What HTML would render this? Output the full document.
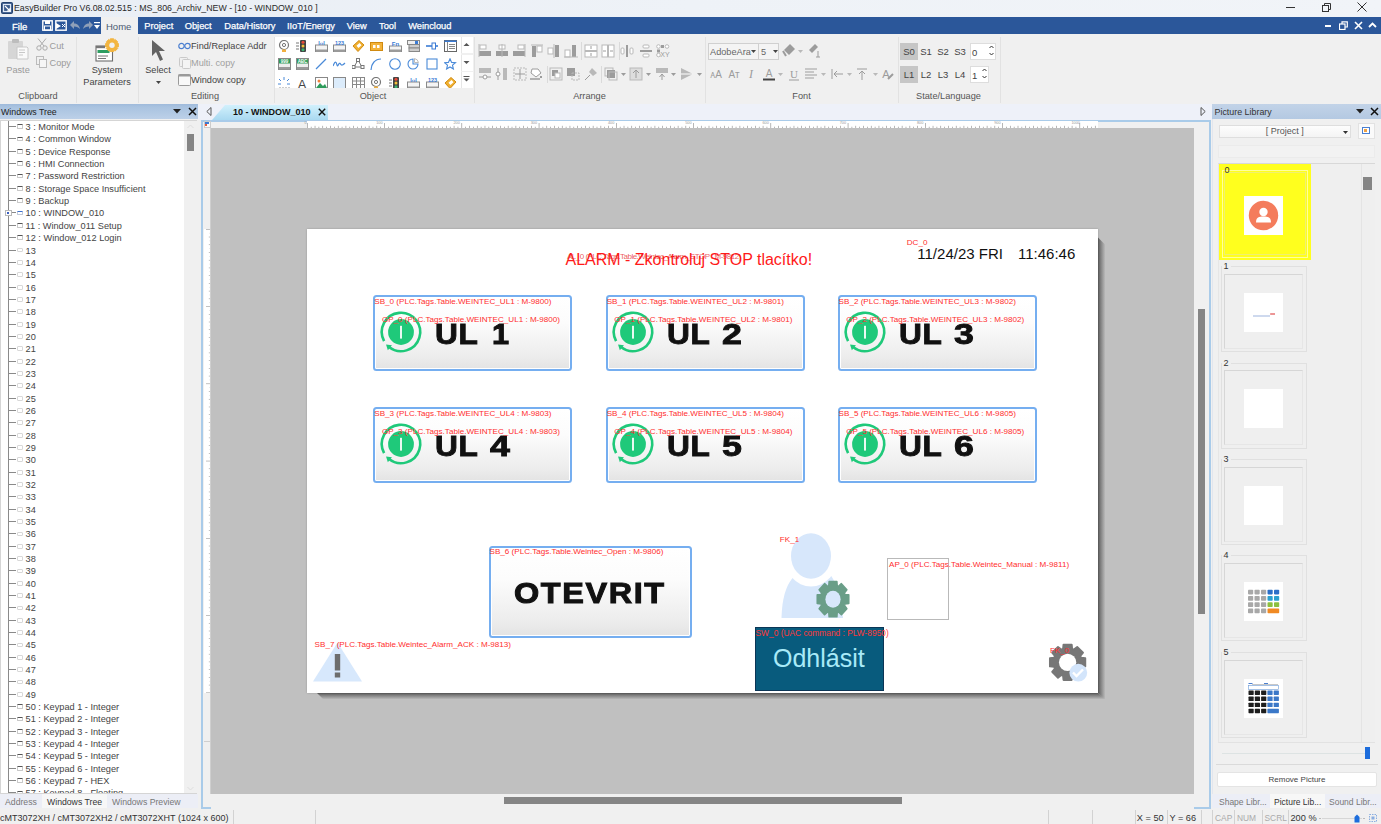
<!DOCTYPE html><html><head><meta charset="utf-8"><style>
html,body{margin:0;padding:0;}
body{width:1381px;height:824px;overflow:hidden;position:relative;background:#f0f0f0;font-family:"Liberation Sans",sans-serif;}
.t{position:absolute;white-space:nowrap;line-height:1;}
svg{display:block;}
</style></head><body>

<div style="position:absolute;left:0px;top:0px;width:1381px;height:17px;background:linear-gradient(90deg,#e9eef5,#eef2f7 50%,#f1f4f8);"></div>
<svg style="position:absolute;left:1px;top:2px;" width="12" height="12" viewBox="0 0 12 12"><rect x="0.5" y="0.5" width="11" height="11" rx="1" fill="#3a5a8c" stroke="#22406e"/><rect x="2.5" y="2.5" width="7" height="7" fill="none" stroke="#dfe8f5" stroke-width="1.2"/><path d="M4 4 L9 9 M9 6 V9 H6" stroke="#fff" stroke-width="1.2" fill="none"/></svg>
<div class="t" style="left:14px;top:3.5px;font-size:8.8px;color:#2a2a2a;">EasyBuilder Pro V6.08.02.515 : MS_806_Archiv_NEW - [10 - WINDOW_010 ]</div>
<div style="position:absolute;left:1286px;top:7px;width:9px;height:1px;background:#333;"></div>
<svg style="position:absolute;left:1322px;top:3px;" width="9" height="9" viewBox="0 0 9 9"><rect x="0.5" y="2.5" width="6" height="6" fill="none" stroke="#333"/><path d="M2.5 2.5 V0.5 H8.5 V6.5 H6.5" fill="none" stroke="#333"/></svg>
<svg style="position:absolute;left:1357px;top:2px;" width="10" height="10" viewBox="0 0 10 10"><path d="M0.5 0.5 L9.5 9.5 M9.5 0.5 L0.5 9.5" stroke="#333" stroke-width="1"/></svg>
<div style="position:absolute;left:0px;top:17px;width:1381px;height:17px;background:#2b579a;"></div>
<div style="position:absolute;left:101px;top:17px;width:37px;height:17px;background:#f0f0f0;"></div>
<div class="t" style="left:12px;top:21.5px;font-size:9.5px;color:#fff;-webkit-text-stroke:0.3px #fff;">File</div>
<svg style="position:absolute;left:42px;top:20px;" width="11" height="11" viewBox="0 0 11 11"><rect x="0.8" y="0.8" width="9.4" height="9.4" fill="none" stroke="#fff" stroke-width="1.4"/><rect x="3" y="1" width="5" height="3" fill="#fff"/><rect x="2.5" y="6" width="6" height="4" fill="none" stroke="#fff"/></svg>
<svg style="position:absolute;left:55px;top:20px;" width="12" height="11" viewBox="0 0 12 11"><rect x="0.8" y="0.8" width="10.4" height="9.4" fill="none" stroke="#fff" stroke-width="1.4"/><path d="M1 3 L6 6 L1 9 Z" fill="#fff"/><path d="M7 4 L10 7 M10 4 L7 7" stroke="#fff"/></svg>
<svg style="position:absolute;left:70px;top:21px;" width="10" height="8" viewBox="0 0 10 8"><path d="M4 0 L0 4 L4 8 V5.5 C7 5.5 8.5 6.5 10 8 C9 4 7 2.5 4 2.5 Z" fill="#8f9fb8"/></svg>
<svg style="position:absolute;left:83px;top:21px;" width="10" height="8" viewBox="0 0 10 8"><path d="M6 0 L10 4 L6 8 V5.5 C3 5.5 1.5 6.5 0 8 C1 4 3 2.5 6 2.5 Z" fill="#8f9fb8"/></svg>
<svg style="position:absolute;left:94px;top:22px;" width="6" height="8" viewBox="0 0 6 8"><rect x="0" y="0" width="6" height="1.2" fill="#fff"/><path d="M0 3 H6 L3 7 Z" fill="#fff"/></svg>
<div class="t" style="left:106px;top:21.5px;font-size:9.5px;color:#4a5a70;">Home</div>
<div class="t" style="left:144.3px;top:21.5px;font-size:9.3px;color:#fff;-webkit-text-stroke:0.25px #fff;">Project</div>
<div class="t" style="left:184.7px;top:21.5px;font-size:9.3px;color:#fff;-webkit-text-stroke:0.25px #fff;">Object</div>
<div class="t" style="left:224.3px;top:21.5px;font-size:9.3px;color:#fff;-webkit-text-stroke:0.25px #fff;">Data/History</div>
<div class="t" style="left:286.9px;top:21.5px;font-size:9.3px;color:#fff;-webkit-text-stroke:0.25px #fff;">IIoT/Energy</div>
<div class="t" style="left:346.7px;top:21.5px;font-size:9.3px;color:#fff;-webkit-text-stroke:0.25px #fff;">View</div>
<div class="t" style="left:379px;top:21.5px;font-size:9.3px;color:#fff;-webkit-text-stroke:0.25px #fff;">Tool</div>
<div class="t" style="left:408.2px;top:21.5px;font-size:9.3px;color:#fff;-webkit-text-stroke:0.25px #fff;">Weincloud</div>
<div style="position:absolute;left:1325px;top:25px;width:6px;height:2px;background:#fff;"></div>
<svg style="position:absolute;left:1339px;top:21px;" width="9" height="9" viewBox="0 0 9 9"><rect x="0.5" y="3" width="5.5" height="5.5" fill="none" stroke="#fff" stroke-width="1.2"/><path d="M3 3 V0.8 H8.3 V6 H6" fill="none" stroke="#fff" stroke-width="1.2"/></svg>
<svg style="position:absolute;left:1354px;top:21px;" width="9" height="9" viewBox="0 0 9 9"><path d="M1 1 L8 8 M8 1 L1 8" stroke="#fff" stroke-width="1.6"/></svg>
<svg style="position:absolute;left:1368px;top:22px;" width="9" height="6" viewBox="0 0 9 6"><path d="M1 5 L4.5 1.5 L8 5" stroke="#fff" stroke-width="1.8" fill="none"/></svg>
<div style="position:absolute;left:0px;top:34px;width:1381px;height:70px;background:#f0f0f0;"></div>
<div style="position:absolute;left:0px;top:103.5px;width:1381px;height:0.8px;background:#d0d6e2;"></div>
<div style="position:absolute;left:76px;top:37px;width:1px;height:66px;background:#e2e2e2;"></div>
<div style="position:absolute;left:138px;top:37px;width:1px;height:66px;background:#e2e2e2;"></div>
<div style="position:absolute;left:273.5px;top:37px;width:1px;height:66px;background:#e2e2e2;"></div>
<div style="position:absolute;left:474px;top:37px;width:1px;height:66px;background:#e2e2e2;"></div>
<div style="position:absolute;left:705px;top:37px;width:1px;height:66px;background:#e2e2e2;"></div>
<div style="position:absolute;left:897.5px;top:37px;width:1px;height:66px;background:#e2e2e2;"></div>
<div style="position:absolute;left:999.5px;top:37px;width:1px;height:66px;background:#e2e2e2;"></div>
<div class="t" style="left:-162px;width:400px;text-align:center;top:91.5px;font-size:9.2px;color:#555;">Clipboard</div>
<div class="t" style="left:5px;width:400px;text-align:center;top:91.5px;font-size:9.2px;color:#555;">Editing</div>
<div class="t" style="left:173px;width:400px;text-align:center;top:91.5px;font-size:9.2px;color:#555;">Object</div>
<div class="t" style="left:389.5px;width:400px;text-align:center;top:91.5px;font-size:9.2px;color:#555;">Arrange</div>
<div class="t" style="left:601.5px;width:400px;text-align:center;top:91.5px;font-size:9.2px;color:#555;">Font</div>
<div class="t" style="left:748.5px;width:400px;text-align:center;top:91.5px;font-size:9.2px;color:#555;">State/Language</div>
<svg style="position:absolute;left:7px;top:38px;" width="22" height="22" viewBox="0 0 22 22"><rect x="1" y="3" width="15" height="18" rx="1" fill="#d6d6d6"/><rect x="5" y="1" width="7" height="4" rx="1" fill="#bdbdbd"/><path d="M10 9 H20 L21 10 V21 H10 Z" fill="#fafafa" stroke="#c8c8c8"/><path d="M12 12 H18 M12 14.5 H18 M12 17 H16" stroke="#c8c8c8"/></svg>
<div class="t" style="left:-182px;width:400px;text-align:center;top:65.5px;font-size:9.2px;color:#9a9a9a;">Paste</div>
<svg style="position:absolute;left:36px;top:38px;" width="12" height="13" viewBox="0 0 12 13"><circle cx="3" cy="10" r="2.2" fill="none" stroke="#aaa"/><circle cx="9" cy="10" r="2.2" fill="none" stroke="#aaa"/><path d="M4 8 L10 0.5 M8 8 L2 0.5" stroke="#aaa"/></svg>
<div class="t" style="left:49.5px;top:41.5px;font-size:9.2px;color:#9a9a9a;">Cut</div>
<svg style="position:absolute;left:36px;top:56px;" width="12" height="13" viewBox="0 0 12 13"><rect x="0.5" y="0.5" width="7" height="8" fill="none" stroke="#bbb"/><rect x="3.5" y="3.5" width="7" height="8" fill="#f6f6f6" stroke="#bbb"/></svg>
<div class="t" style="left:49.5px;top:58.5px;font-size:9.2px;color:#9a9a9a;">Copy</div>
<svg style="position:absolute;left:95px;top:38px;" width="26" height="26" viewBox="0 0 26 26"><rect x="1" y="8" width="16.5" height="15" fill="#fff" stroke="#6d6d6d" stroke-width="1.1"/><rect x="2.5" y="12" width="12" height="3" fill="#2e9e62"/><path d="M3 18 H13 M3 20.5 H11" stroke="#777"/><rect x="1" y="8" width="9" height="2.2" fill="#777"/><path d="M15.15 2.56 L15.24 0.84 L18.76 0.84 L18.85 2.56 L18.97 2.61 L20.25 1.46 L22.74 3.95 L21.59 5.23 L21.64 5.35 L23.36 5.44 L23.36 8.96 L21.64 9.05 L21.59 9.17 L22.74 10.45 L20.25 12.94 L18.97 11.79 L18.85 11.84 L18.76 13.56 L15.24 13.56 L15.15 11.84 L15.03 11.79 L13.75 12.94 L11.26 10.45 L12.41 9.17 L12.36 9.05 L10.64 8.96 L10.64 5.44 L12.36 5.35 L12.41 5.23 L11.26 3.95 L13.75 1.46 L15.03 2.61 Z" fill="#f3b53f" stroke="#f3b53f" stroke-width="1.0" stroke-linejoin="round"/><circle cx="17" cy="7.2" r="2.7" fill="#f0f0f0"/></svg>
<div class="t" style="left:-93px;width:400px;text-align:center;top:65.5px;font-size:9.2px;color:#444;">System</div>
<div class="t" style="left:-93px;width:400px;text-align:center;top:77.5px;font-size:9.2px;color:#444;">Parameters</div>
<svg style="position:absolute;left:151px;top:39px;" width="17" height="23" viewBox="0 0 17 23"><path d="M1 1 L1 17 L5 13 L9 22 L12 20.5 L8 12 L14 12 Z" fill="#646464"/></svg>
<div class="t" style="left:-42px;width:400px;text-align:center;top:65.5px;font-size:9.2px;color:#444;">Select</div>
<svg style="position:absolute;left:156px;top:81px;" width="5" height="3" viewBox="0 0 5 3"><path d="M0 0 H5 L2.5 3 Z" fill="#444"/></svg>
<svg style="position:absolute;left:178px;top:42px;" width="13" height="8" viewBox="0 0 13 8"><circle cx="3.5" cy="4" r="2.7" fill="none" stroke="#4a7fd0" stroke-width="1.2"/><circle cx="9.5" cy="4" r="2.7" fill="none" stroke="#4a7fd0" stroke-width="1.2"/></svg>
<div class="t" style="left:191px;top:41.5px;font-size:9.2px;color:#444;">Find/Replace Addr</div>
<svg style="position:absolute;left:179px;top:57px;" width="12" height="12" viewBox="0 0 12 12"><rect x="0.5" y="0.5" width="8" height="9" rx="1" fill="none" stroke="#c9c9c9"/><rect x="3.5" y="2.5" width="8" height="9" rx="1" fill="#f4f4f4" stroke="#c9c9c9"/></svg>
<div class="t" style="left:191px;top:58.5px;font-size:9.2px;color:#a0a0a0;">Multi. copy</div>
<svg style="position:absolute;left:178px;top:74px;" width="13" height="12" viewBox="0 0 13 12"><rect x="0.5" y="0.5" width="12" height="11" rx="1" fill="#f8f8f8" stroke="#9a9a9a"/><rect x="0.5" y="0.5" width="12" height="2" fill="#9a9a9a"/></svg>
<div class="t" style="left:191px;top:75.5px;font-size:9.2px;color:#444;">Window copy</div>
<div style="position:absolute;left:275px;top:37px;width:186px;height:51px;background:#fff;"></div>
<div style="position:absolute;left:461px;top:37px;width:11px;height:16px;background:#fff;border-left:1px solid #e6e6e6;"></div>
<div style="position:absolute;left:461px;top:54.5px;width:11px;height:16px;background:#fff;border-left:1px solid #e6e6e6;"></div>
<div style="position:absolute;left:461px;top:71.5px;width:11px;height:16px;background:#fff;border-left:1px solid #e6e6e6;"></div>
<svg style="position:absolute;left:463px;top:42px;" width="7" height="5" viewBox="0 0 7 5"><path d="M0.5 4 L3.5 1 L6.5 4 Z" fill="#555"/></svg>
<svg style="position:absolute;left:463px;top:60px;" width="7" height="5" viewBox="0 0 7 5"><path d="M0.5 1 L3.5 4 L6.5 1 Z" fill="#555"/></svg>
<svg style="position:absolute;left:463px;top:76px;" width="7" height="6" viewBox="0 0 7 6"><path d="M0.5 0.5 H6.5" stroke="#555"/><path d="M0.5 2.5 L3.5 5.5 L6.5 2.5 Z" fill="#555"/></svg>
<div style="position:absolute;left:275px;top:37px;width:186px;height:51px;overflow:hidden;">
<svg style="position:absolute;left:2.9px;top:2.9px;" width="13" height="12" viewBox="0 0 13 12"><circle cx="6" cy="5" r="4.5" fill="#fff" stroke="#777" stroke-width="1.2"/><circle cx="6" cy="5" r="1.6" fill="none" stroke="#777"/><rect x="4" y="9.5" width="4" height="2.5" fill="#f0b040"/></svg>
<svg style="position:absolute;left:21.4px;top:2.9px;" width="13" height="12" viewBox="0 0 13 12"><rect x="4" y="0" width="6" height="12" rx="1" fill="#444"/><circle cx="7" cy="2.2" r="1.5" fill="#e84a3a"/><circle cx="7" cy="6" r="1.5" fill="#f4c03a"/><circle cx="7" cy="9.8" r="1.5" fill="#3cb371"/><path d="M0 3 H3 M0 6 H3 M0 9 H3" stroke="#777"/></svg>
<svg style="position:absolute;left:39.9px;top:2.9px;" width="13" height="12" viewBox="0 0 13 12"><rect x="0.5" y="5" width="12" height="7" fill="#f4f4f4" stroke="#8a8a8a"/><rect x="1" y="9.5" width="11" height="2.5" fill="#9a9a9a"/><text x="6.5" y="5" font-size="5.5" font-family="Liberation Sans" font-weight="bold" fill="#3a7bd5" text-anchor="middle">I‹›I</text></svg>
<svg style="position:absolute;left:58.4px;top:2.9px;" width="13" height="12" viewBox="0 0 13 12"><rect x="0.5" y="5" width="12" height="7" fill="#f4f4f4" stroke="#8a8a8a"/><rect x="1" y="9.5" width="11" height="2.5" fill="#9a9a9a"/><text x="6.5" y="5" font-size="5.5" font-family="Liberation Sans" font-weight="bold" fill="#3a7bd5" text-anchor="middle">123</text></svg>
<svg style="position:absolute;left:76.9px;top:2.9px;" width="13" height="12" viewBox="0 0 13 12"><path d="M1 6 L7 0.5 L12 5 L6 11.5 Z" fill="#f0b030" stroke="#d08a10"/><rect x="5" y="4" width="4" height="3" fill="#fff" transform="rotate(-40 7 5.5)"/></svg>
<svg style="position:absolute;left:95.4px;top:2.9px;" width="13" height="12" viewBox="0 0 13 12"><rect x="0.5" y="2.5" width="12" height="8" fill="#f3b23a" stroke="#d08a10"/><rect x="3" y="5" width="2.5" height="3" fill="#fff"/><rect x="7" y="5" width="2.5" height="3" fill="#fff"/></svg>
<svg style="position:absolute;left:113.9px;top:2.9px;" width="13" height="12" viewBox="0 0 13 12"><rect x="0.5" y="6" width="12" height="6" fill="#f4f4f4" stroke="#8a8a8a"/><rect x="1" y="9.5" width="11" height="2.5" fill="#9a9a9a"/><text x="6.5" y="5.5" font-size="6" font-family="Liberation Sans" font-weight="bold" fill="#3a7bd5" text-anchor="middle">Fn</text></svg>
<svg style="position:absolute;left:132.4px;top:2.9px;" width="13" height="12" viewBox="0 0 13 12"><rect x="0.5" y="0.5" width="12" height="4" fill="#eee" stroke="#888"/><rect x="8" y="1" width="3" height="3" fill="#3a7bd5"/><rect x="2" y="4.5" width="10.5" height="3.5" fill="#ccc" stroke="#888"/><rect x="2" y="8" width="10.5" height="3.5" fill="#ccc" stroke="#888"/></svg>
<svg style="position:absolute;left:150.9px;top:2.9px;" width="13" height="12" viewBox="0 0 13 12"><path d="M0 6 H12" stroke="#3a7bd5" stroke-width="1.6"/><rect x="6" y="3" width="3.5" height="6" fill="#fff" stroke="#3a7bd5"/></svg>
<svg style="position:absolute;left:169.4px;top:2.9px;" width="13" height="12" viewBox="0 0 13 12"><rect x="0.5" y="0.5" width="12" height="11" fill="#fff" stroke="#666"/><rect x="0.5" y="0.5" width="12" height="1.5" fill="#3a7bd5"/><path d="M3.5 2 V11.5 M5 4.5 H11 M5 6.5 H11 M5 8.5 H11" stroke="#888"/></svg>
<svg style="position:absolute;left:2.9px;top:21.4px;" width="13" height="12" viewBox="0 0 13 12"><rect x="0.5" y="0.5" width="12" height="11" fill="#eee" stroke="#888"/><rect x="1" y="1" width="11" height="4.5" fill="#2e9b5a"/><text x="6.5" y="5" font-size="4.5" font-family="Liberation Sans" font-weight="bold" fill="#fff" text-anchor="middle">999</text><rect x="1" y="9" width="11" height="2.5" fill="#9a9a9a"/></svg>
<svg style="position:absolute;left:21.4px;top:21.4px;" width="13" height="12" viewBox="0 0 13 12"><rect x="0.5" y="0.5" width="12" height="11" fill="#eee" stroke="#888"/><rect x="1" y="1" width="11" height="4.5" fill="#2e9b5a"/><text x="6.5" y="5" font-size="4.5" font-family="Liberation Sans" font-weight="bold" fill="#fff" text-anchor="middle">ABC</text><rect x="1" y="9" width="11" height="2.5" fill="#9a9a9a"/></svg>
<svg style="position:absolute;left:39.9px;top:21.4px;" width="13" height="12" viewBox="0 0 13 12"><path d="M1 11 L11 1" stroke="#4a8ad8" stroke-width="1.2"/></svg>
<svg style="position:absolute;left:58.4px;top:21.4px;" width="13" height="12" viewBox="0 0 13 12"><path d="M0 8 C2 3 3 3 4 7 C5 10 6 3 7.5 6 C8.5 8 10 7 12 5" stroke="#4a8ad8" stroke-width="1.2" fill="none"/></svg>
<svg style="position:absolute;left:76.9px;top:21.4px;" width="13" height="12" viewBox="0 0 13 12"><path d="M2 9 H10 M6 2 L2 9 M6 2 L10 9" stroke="#777" fill="none"/><rect x="0" y="7.5" width="3" height="3" fill="#fff" stroke="#777"/><rect x="9" y="7.5" width="3" height="3" fill="#fff" stroke="#777"/><rect x="4.5" y="0.5" width="3" height="3" fill="#fff" stroke="#777"/></svg>
<svg style="position:absolute;left:95.4px;top:21.4px;" width="13" height="12" viewBox="0 0 13 12"><path d="M1 12 C1 6 5 1 11 1" stroke="#4a8ad8" stroke-width="1.2" fill="none"/></svg>
<svg style="position:absolute;left:113.9px;top:21.4px;" width="13" height="12" viewBox="0 0 13 12"><circle cx="6" cy="6" r="5.3" fill="none" stroke="#4a8ad8" stroke-width="1.1"/></svg>
<svg style="position:absolute;left:132.4px;top:21.4px;" width="13" height="12" viewBox="0 0 13 12"><path d="M6 1 A5 5 0 1 0 11 6 H6 Z" fill="none" stroke="#4a8ad8" stroke-width="1.1"/><path d="M7.5 0.5 A5 5 0 0 1 11.5 4.5 H7.5 Z" fill="none" stroke="#bbb"/></svg>
<svg style="position:absolute;left:150.9px;top:21.4px;" width="13" height="12" viewBox="0 0 13 12"><rect x="1" y="1" width="10" height="10" fill="none" stroke="#4a8ad8" stroke-width="1.1"/></svg>
<svg style="position:absolute;left:169.4px;top:21.4px;" width="13" height="12" viewBox="0 0 13 12"><path d="M6 0.8 L7.6 4.4 L11.5 4.7 L8.5 7.2 L9.4 11 L6 9 L2.6 11 L3.5 7.2 L0.5 4.7 L4.4 4.4 Z" fill="none" stroke="#4a8ad8" stroke-width="1.1"/></svg>
<svg style="position:absolute;left:2.9px;top:39.7px;" width="13" height="12" viewBox="0 0 13 12"><path d="M6 0 V3 M1 2 L3 4 M11 2 L9 4 M0 7 H3 M9 7 H12" stroke="#4a8ad8"/><path d="M2 10 V12 M5 10 V12 M8 10 V12 M11 10 V12" stroke="#999"/></svg>
<svg style="position:absolute;left:21.4px;top:39.7px;" width="13" height="12" viewBox="0 0 13 12"><text x="6" y="12" font-size="13" font-family="Liberation Sans" fill="#444" text-anchor="middle">A</text></svg>
<svg style="position:absolute;left:39.9px;top:39.7px;" width="13" height="12" viewBox="0 0 13 12"><rect x="0.5" y="0.5" width="12" height="11" fill="#fff" stroke="#888"/><circle cx="4" cy="4" r="1.5" fill="#f0803a"/><path d="M1 11 L5 6 L8 9 L10 7 L12 11 Z" fill="#2e9b5a"/></svg>
<svg style="position:absolute;left:58.4px;top:39.7px;" width="13" height="12" viewBox="0 0 13 12"><rect x="0.5" y="0.5" width="12" height="11" fill="#dcecfb" stroke="#888"/></svg>
<svg style="position:absolute;left:76.9px;top:39.7px;" width="13" height="12" viewBox="0 0 13 12"><rect x="0.5" y="0.5" width="12" height="11" fill="#fff" stroke="#888"/><path d="M4.5 0.5 V11.5 M8.5 0.5 V11.5 M0.5 4 H12.5 M0.5 7.5 H12.5" stroke="#888"/></svg>
<svg style="position:absolute;left:95.4px;top:39.7px;" width="13" height="12" viewBox="0 0 13 12"><circle cx="6" cy="5" r="4.5" fill="#fff" stroke="#777" stroke-width="1.2"/><circle cx="6" cy="5" r="1.6" fill="none" stroke="#777"/><rect x="4" y="9.5" width="4" height="2.5" fill="#f0b040"/></svg>
<svg style="position:absolute;left:113.9px;top:39.7px;" width="13" height="12" viewBox="0 0 13 12"><rect x="4" y="0" width="6" height="12" rx="1" fill="#444"/><circle cx="7" cy="2.2" r="1.5" fill="#e84a3a"/><circle cx="7" cy="6" r="1.5" fill="#f4c03a"/><circle cx="7" cy="9.8" r="1.5" fill="#3cb371"/><path d="M0 3 H3 M0 6 H3 M0 9 H3" stroke="#777"/></svg>
<svg style="position:absolute;left:132.4px;top:39.7px;" width="13" height="12" viewBox="0 0 13 12"><rect x="0.5" y="5" width="12" height="7" fill="#f4f4f4" stroke="#8a8a8a"/><rect x="1" y="9.5" width="11" height="2.5" fill="#9a9a9a"/><text x="6.5" y="5" font-size="5.5" font-family="Liberation Sans" font-weight="bold" fill="#3a7bd5" text-anchor="middle">I‹›I</text></svg>
<svg style="position:absolute;left:150.9px;top:39.7px;" width="13" height="12" viewBox="0 0 13 12"><rect x="0.5" y="5" width="12" height="7" fill="#f4f4f4" stroke="#8a8a8a"/><rect x="1" y="9.5" width="11" height="2.5" fill="#9a9a9a"/><text x="6.5" y="5" font-size="5.5" font-family="Liberation Sans" font-weight="bold" fill="#3a7bd5" text-anchor="middle">123</text></svg>
<svg style="position:absolute;left:169.4px;top:39.7px;" width="13" height="12" viewBox="0 0 13 12"><path d="M1 6 L7 0.5 L12 5 L6 11.5 Z" fill="#f0b030" stroke="#d08a10"/><rect x="5" y="4" width="4" height="3" fill="#fff" transform="rotate(-40 7 5.5)"/></svg>
</div>
<svg style="position:absolute;left:477.8px;top:43.5px;" width="14" height="14" viewBox="0 0 14 14"><rect x="2" y="1" width="6" height="4" fill="#fff" stroke="#b9b9b9"/><rect x="1" y="7" width="12" height="5" fill="#9c9c9c"/><path d="M1 0 V13" stroke="#b9b9b9"/></svg>
<svg style="position:absolute;left:494.8px;top:43.5px;" width="14" height="14" viewBox="0 0 14 14"><rect x="4" y="1" width="6" height="4" fill="#fff" stroke="#b9b9b9"/><rect x="1" y="7" width="12" height="5" fill="#9c9c9c"/><path d="M7 0 V13" stroke="#b9b9b9"/></svg>
<svg style="position:absolute;left:511.70000000000005px;top:43.5px;" width="14" height="14" viewBox="0 0 14 14"><rect x="6" y="1" width="6" height="4" fill="#fff" stroke="#b9b9b9"/><rect x="1" y="7" width="12" height="5" fill="#9c9c9c"/><path d="M13 0 V13" stroke="#b9b9b9"/></svg>
<svg style="position:absolute;left:529.6px;top:43.5px;" width="14" height="14" viewBox="0 0 14 14"><path d="M1 1 H13" stroke="#b9b9b9"/><rect x="2" y="2" width="4" height="11" fill="#9c9c9c"/><rect x="7" y="2" width="5" height="6" fill="#fff" stroke="#b9b9b9"/></svg>
<svg style="position:absolute;left:547.3px;top:43.5px;" width="14" height="14" viewBox="0 0 14 14"><rect x="1" y="4" width="5" height="6" fill="#fff" stroke="#b9b9b9"/><rect x="8" y="1" width="4" height="12" fill="#9c9c9c"/><path d="M7 0 V14" stroke="#b9b9b9"/></svg>
<svg style="position:absolute;left:564.3px;top:43.5px;" width="14" height="14" viewBox="0 0 14 14"><rect x="1" y="6" width="5" height="7" fill="#fff" stroke="#b9b9b9"/><rect x="8" y="1" width="4" height="12" fill="#9c9c9c"/><path d="M0 13 H14" stroke="#b9b9b9"/></svg>
<svg style="position:absolute;left:583.8px;top:43.5px;" width="14" height="14" viewBox="0 0 14 14"><rect x="1" y="1" width="12" height="12" fill="#fff" stroke="#b9b9b9"/><path d="M1 7 H13" stroke="#b9b9b9" stroke-width="2"/><path d="M7 2 V5 M7 9 V12" stroke="#9c9c9c"/></svg>
<svg style="position:absolute;left:601.2px;top:43.5px;" width="14" height="14" viewBox="0 0 14 14"><rect x="1" y="1" width="12" height="12" fill="#fff" stroke="#b9b9b9"/><path d="M7 1 V13" stroke="#b9b9b9" stroke-width="2"/><path d="M2 7 H5 M9 7 H12" stroke="#9c9c9c"/></svg>
<svg style="position:absolute;left:620.3px;top:43.5px;" width="14" height="14" viewBox="0 0 14 14"><rect x="1" y="4" width="3" height="6" rx="1" fill="#fff" stroke="#b9b9b9"/><rect x="10" y="4" width="3" height="6" rx="1" fill="#fff" stroke="#b9b9b9"/><path d="M7 1 V13" stroke="#9c9c9c" stroke-width="2"/></svg>
<svg style="position:absolute;left:638.5px;top:43.5px;" width="14" height="14" viewBox="0 0 14 14"><rect x="4" y="1" width="6" height="3" rx="1" fill="#fff" stroke="#b9b9b9"/><rect x="4" y="10" width="6" height="3" rx="1" fill="#fff" stroke="#b9b9b9"/><path d="M1 7 H13" stroke="#9c9c9c" stroke-width="2"/></svg>
<svg style="position:absolute;left:655.9px;top:43.5px;" width="14" height="14" viewBox="0 0 14 14"><circle cx="2.5" cy="2.5" r="1.8" fill="#fff" stroke="#b9b9b9"/><rect x="5" y="1" width="3" height="3" fill="#9c9c9c"/><circle cx="11" cy="2.5" r="1.8" fill="#fff" stroke="#b9b9b9"/><rect x="1" y="5.5" width="3" height="3" fill="#9c9c9c"/><circle cx="2.5" cy="11" r="1.8" fill="#fff" stroke="#b9b9b9"/><text x="9" y="13" font-size="7" font-family="Liberation Sans" fill="#9c9c9c" text-anchor="middle">XY</text></svg>
<div style="position:absolute;left:581.2px;top:42px;width:1px;height:18px;background:#dadada;"></div>
<div style="position:absolute;left:618.6px;top:42px;width:1px;height:18px;background:#dadada;"></div>
<svg style="position:absolute;left:477.8px;top:66.6px;" width="14" height="14" viewBox="0 0 14 14"><rect x="1" y="1" width="12" height="5" fill="#b9b9b9"/><path d="M1 10 H13" stroke="#9c9c9c"/><circle cx="7" cy="10" r="2" fill="#fff" stroke="#9c9c9c"/></svg>
<svg style="position:absolute;left:495.2px;top:66.6px;" width="14" height="14" viewBox="0 0 14 14"><rect x="8" y="1" width="4" height="12" fill="#b9b9b9"/><path d="M3 1 V13" stroke="#9c9c9c"/><circle cx="3" cy="7" r="2" fill="#fff" stroke="#9c9c9c"/></svg>
<svg style="position:absolute;left:512.5px;top:66.6px;" width="14" height="14" viewBox="0 0 14 14"><rect x="1" y="1" width="12" height="12" fill="none" stroke="#b9b9b9" stroke-dasharray="2 1"/><path d="M7 2 V12 M2 7 H12" stroke="#9c9c9c"/></svg>
<svg style="position:absolute;left:529px;top:66.6px;" width="14" height="14" viewBox="0 0 14 14"><path d="M3 2 L9 2 L12 6 L7 10 L2 6 Z" fill="#fff" stroke="#9c9c9c"/><path d="M1 12 H11" stroke="#9c9c9c" stroke-width="1.5"/><rect x="11" y="9" width="2" height="2" fill="#9c9c9c"/></svg>
<svg style="position:absolute;left:549px;top:66.6px;" width="14" height="14" viewBox="0 0 14 14"><rect x="1" y="1" width="12" height="12" fill="none" stroke="#b9b9b9"/><rect x="3" y="3" width="6" height="6" fill="#9c9c9c"/><rect x="6" y="6" width="5" height="5" fill="#fff" stroke="#b9b9b9"/></svg>
<svg style="position:absolute;left:566.4px;top:66.6px;" width="14" height="14" viewBox="0 0 14 14"><rect x="1" y="1" width="8" height="8" fill="#9c9c9c"/><rect x="6" y="6" width="7" height="7" fill="none" stroke="#b9b9b9" stroke-dasharray="2 1"/></svg>
<svg style="position:absolute;left:583.8px;top:66.6px;" width="14" height="14" viewBox="0 0 14 14"><path d="M8 1 L13 6 L9 9 L5 5 Z" fill="#b9b9b9"/><path d="M6 8 L1 13" stroke="#9c9c9c"/></svg>
<svg style="position:absolute;left:603.8px;top:66.6px;" width="14" height="14" viewBox="0 0 14 14"><rect x="1" y="1" width="8" height="8" fill="none" stroke="#b9b9b9"/><rect x="3" y="3" width="8" height="8" fill="#9c9c9c"/><rect x="5" y="5" width="8" height="8" fill="none" stroke="#b9b9b9"/></svg>
<svg style="position:absolute;left:629px;top:66.6px;" width="14" height="14" viewBox="0 0 14 14"><rect x="1" y="1" width="12" height="12" fill="#ddd" stroke="#b9b9b9"/><path d="M7 11 V3 M4 6 L7 3 L10 6" stroke="#9c9c9c" fill="none"/></svg>
<svg style="position:absolute;left:655px;top:66.6px;" width="14" height="14" viewBox="0 0 14 14"><rect x="1" y="1" width="12" height="5" fill="#b9b9b9"/><path d="M7 13 V7 M4.5 10 L7 7 L9.5 10" stroke="#9c9c9c" fill="none"/></svg>
<svg style="position:absolute;left:680px;top:66.6px;" width="14" height="14" viewBox="0 0 14 14"><path d="M1 1 L13 7 L1 13 Z" fill="#b9b9b9"/><path d="M1 7 H13" stroke="#fff"/></svg>
<svg style="position:absolute;left:620.5px;top:72.5px;" width="5" height="3" viewBox="0 0 5 3"><path d="M0 0 H5 L2.5 3 Z" fill="#9c9c9c"/></svg>
<svg style="position:absolute;left:645.5px;top:72.5px;" width="5" height="3" viewBox="0 0 5 3"><path d="M0 0 H5 L2.5 3 Z" fill="#9c9c9c"/></svg>
<svg style="position:absolute;left:670.5px;top:72.5px;" width="5" height="3" viewBox="0 0 5 3"><path d="M0 0 H5 L2.5 3 Z" fill="#9c9c9c"/></svg>
<svg style="position:absolute;left:696.5px;top:72.5px;" width="5" height="3" viewBox="0 0 5 3"><path d="M0 0 H5 L2.5 3 Z" fill="#9c9c9c"/></svg>
<div style="position:absolute;left:546.5px;top:66px;width:1px;height:17px;background:#dadada;"></div>
<div style="position:absolute;left:600.7px;top:66px;width:1px;height:17px;background:#dadada;"></div>
<div style="position:absolute;left:708px;top:42.5px;width:71px;height:17px;background:#f4f4f4;border:1px solid #d0d0d0;box-sizing:border-box;"></div>
<div style="position:absolute;left:758px;top:43px;width:1px;height:16px;background:#d0d0d0;"></div>
<div class="t" style="left:710px;top:47.5px;font-size:9.2px;color:#666;">AdobeAra</div>
<svg style="position:absolute;left:751px;top:50px;" width="5" height="3" viewBox="0 0 5 3"><path d="M0 0 H5 L2.5 3 Z" fill="#444"/></svg>
<div class="t" style="left:761px;top:47.5px;font-size:9.2px;color:#666;">5</div>
<svg style="position:absolute;left:773px;top:50px;" width="5" height="3" viewBox="0 0 5 3"><path d="M0 0 H5 L2.5 3 Z" fill="#444"/></svg>
<svg style="position:absolute;left:782px;top:43px;" width="14" height="15" viewBox="0 0 14 15"><path d="M2 7 L8 1 L13 6 L7 12 Z" fill="#9c9c9c"/><path d="M1 8 L4 13" stroke="#9c9c9c" stroke-width="2"/></svg>
<svg style="position:absolute;left:798px;top:50px;" width="5" height="3" viewBox="0 0 5 3"><path d="M0 0 H5 L2.5 3 Z" fill="#b9b9b9"/></svg>
<svg style="position:absolute;left:807px;top:43px;" width="14" height="15" viewBox="0 0 14 15"><path d="M2 7 L8 1 L11 4 L5 10 Z" fill="#9c9c9c"/><path d="M11 8 V14 M9 14 H13" stroke="#9c9c9c"/></svg>
<svg style="position:absolute;left:709px;top:67px;" width="14" height="14" viewBox="0 0 14 14"><text x="7" y="11" font-size="10" font-family="Liberation Sans" fill="#9c9c9c" text-anchor="middle">ᴀA</text></svg>
<svg style="position:absolute;left:727px;top:67px;" width="14" height="14" viewBox="0 0 14 14"><text x="7" y="11" font-size="10" font-family="Liberation Sans" fill="#9c9c9c" text-anchor="middle">Aᴛ</text></svg>
<svg style="position:absolute;left:744px;top:67px;" width="14" height="14" viewBox="0 0 14 14"><text x="7" y="11" font-size="12" font-family="Liberation Serif" font-style="italic" fill="#9c9c9c" text-anchor="middle">I</text></svg>
<svg style="position:absolute;left:762px;top:67px;" width="14" height="14" viewBox="0 0 14 14"><text x="7" y="10" font-size="10" font-family="Liberation Sans" fill="#9c9c9c" text-anchor="middle">A</text><rect x="1" y="11.5" width="12" height="2" fill="#444"/></svg>
<svg style="position:absolute;left:787px;top:67px;" width="14" height="14" viewBox="0 0 14 14"><text x="7" y="11" font-size="11" font-family="Liberation Serif" fill="#9c9c9c" text-anchor="middle">U</text><path d="M2 13 H12" stroke="#9c9c9c"/></svg>
<svg style="position:absolute;left:804px;top:67px;" width="14" height="14" viewBox="0 0 14 14"><path d="M1 2 H13 M1 5 H10 M1 8 H13 M1 11 H10" stroke="#b9b9b9" stroke-width="1.5"/></svg>
<svg style="position:absolute;left:830px;top:67px;" width="14" height="14" viewBox="0 0 14 14"><path d="M2 2 V12 M4 7 H13 M4 7 L7 4 M4 7 L7 10" stroke="#9c9c9c" fill="none"/></svg>
<svg style="position:absolute;left:855px;top:67px;" width="14" height="14" viewBox="0 0 14 14"><path d="M2 2 H12 M7 4 V13 M4 7 L7 4 L10 7" stroke="#9c9c9c" fill="none"/></svg>
<svg style="position:absolute;left:880px;top:67px;" width="14" height="14" viewBox="0 0 14 14"><text x="6" y="11" font-size="11" font-family="Liberation Sans" fill="#9c9c9c" text-anchor="middle">A</text><path d="M8 12 L13 7" stroke="#9c9c9c" stroke-width="2"/></svg>
<svg style="position:absolute;left:777.5px;top:73px;" width="5" height="3" viewBox="0 0 5 3"><path d="M0 0 H5 L2.5 3 Z" fill="#b9b9b9"/></svg>
<svg style="position:absolute;left:820.5px;top:73px;" width="5" height="3" viewBox="0 0 5 3"><path d="M0 0 H5 L2.5 3 Z" fill="#b9b9b9"/></svg>
<svg style="position:absolute;left:846.5px;top:73px;" width="5" height="3" viewBox="0 0 5 3"><path d="M0 0 H5 L2.5 3 Z" fill="#b9b9b9"/></svg>
<svg style="position:absolute;left:872.5px;top:73px;" width="5" height="3" viewBox="0 0 5 3"><path d="M0 0 H5 L2.5 3 Z" fill="#b9b9b9"/></svg>
<div style="position:absolute;left:900px;top:42.5px;width:18px;height:17px;background:#c6c6c6;"></div>
<div style="position:absolute;left:900px;top:65.5px;width:18px;height:17px;background:#c6c6c6;"></div>
<div class="t" style="left:709px;width:400px;text-align:center;top:46.5px;font-size:9.5px;color:#444;">S0</div>
<div class="t" style="left:726px;width:400px;text-align:center;top:46.5px;font-size:9.5px;color:#444;">S1</div>
<div class="t" style="left:743px;width:400px;text-align:center;top:46.5px;font-size:9.5px;color:#444;">S2</div>
<div class="t" style="left:760px;width:400px;text-align:center;top:46.5px;font-size:9.5px;color:#444;">S3</div>
<div class="t" style="left:709px;width:400px;text-align:center;top:69.5px;font-size:9.5px;color:#444;">L1</div>
<div class="t" style="left:726px;width:400px;text-align:center;top:69.5px;font-size:9.5px;color:#444;">L2</div>
<div class="t" style="left:743px;width:400px;text-align:center;top:69.5px;font-size:9.5px;color:#444;">L3</div>
<div class="t" style="left:760px;width:400px;text-align:center;top:69.5px;font-size:9.5px;color:#444;">L4</div>
<div style="position:absolute;left:970px;top:42.5px;width:26px;height:17px;background:#fff;border:1px solid #ddd;box-sizing:border-box;"></div>
<div class="t" style="left:972px;top:47.5px;font-size:9.5px;color:#444;">0</div>
<svg style="position:absolute;left:989px;top:45px;" width="5" height="11" viewBox="0 0 5 11"><path d="M0.5 3 L2.5 1 L4.5 3 M0.5 8 L2.5 10 L4.5 8" stroke="#333" fill="none"/></svg>
<div style="position:absolute;left:970px;top:65.5px;width:19px;height:17px;background:#fff;border:1px solid #ddd;box-sizing:border-box;"></div>
<div class="t" style="left:972px;top:70.5px;font-size:9.5px;color:#444;">1</div>
<svg style="position:absolute;left:982px;top:68px;" width="5" height="11" viewBox="0 0 5 11"><path d="M0.5 3 L2.5 1 L4.5 3 M0.5 8 L2.5 10 L4.5 8" stroke="#333" fill="none"/></svg>
<div style="position:absolute;left:0px;top:104px;width:198px;height:14.5px;background:linear-gradient(#9fbadb,#a9c3e0 20%,#bcd0e8);"></div>
<div class="t" style="left:1px;top:107.5px;font-size:8.8px;color:#222;">Windows Tree</div>
<svg style="position:absolute;left:173px;top:109px;" width="8" height="5" viewBox="0 0 8 5"><path d="M0 0 H8 L4 4.5 Z" fill="#222"/></svg>
<svg style="position:absolute;left:188px;top:107px;" width="9" height="9" viewBox="0 0 9 9"><path d="M1 1 L8 8 M8 1 L1 8" stroke="#111" stroke-width="1.5"/></svg>
<div style="position:absolute;left:0px;top:118.5px;width:198px;height:675px;background:#f0f0f0;"></div>
<div style="position:absolute;left:0px;top:120px;width:197px;height:674px;background:#fff;border:1px solid #d5d5d5;box-sizing:border-box;"></div>
<div style="position:absolute;left:184px;top:121px;width:12.5px;height:672px;background:#f0f0f0;"></div>
<svg style="position:absolute;left:187px;top:124px;" width="7" height="5" viewBox="0 0 7 5"><path d="M0.5 4 L3.5 1 L6.5 4" stroke="#ddd" fill="none"/></svg>
<div style="position:absolute;left:187px;top:134px;width:7px;height:17px;background:#858585;"></div>
<svg style="position:absolute;left:187px;top:786px;" width="7" height="5" viewBox="0 0 7 5"><path d="M0.5 1 L3.5 4 L6.5 1" stroke="#ddd" fill="none"/></svg>
<div style="position:absolute;left:0;top:121px;width:184px;height:672px;overflow:hidden;">
<div style="position:absolute;left:8px;top:0px;width:1px;height:672px;background:#8a8a8a;"></div>
<div style="position:absolute;left:9px;top:5.1px;width:7px;height:1px;background:#8a8a8a;"></div>
<div style="position:absolute;left:17.1px;top:3.3px;box-sizing:border-box;width:6.2px;height:4.8px;border-radius:1px;border:1px solid #c8c8c8;border-top:1.5px solid #555;background:#fff;"></div>
<div class="t" style="left:25.6px;top:2.1px;font-size:9.2px;color:#444;">3 : Monitor Mode</div>
<div style="position:absolute;left:9px;top:17.44px;width:7px;height:1px;background:#8a8a8a;"></div>
<div style="position:absolute;left:17.1px;top:15.64px;box-sizing:border-box;width:6.2px;height:4.8px;border-radius:1px;border:1px solid #c8c8c8;border-top:1.5px solid #555;background:#fff;"></div>
<div class="t" style="left:25.6px;top:14.44px;font-size:9.2px;color:#444;">4 : Common Window</div>
<div style="position:absolute;left:9px;top:29.78px;width:7px;height:1px;background:#8a8a8a;"></div>
<div style="position:absolute;left:17.1px;top:27.98px;box-sizing:border-box;width:6.2px;height:4.8px;border-radius:1px;border:1px solid #c8c8c8;border-top:1.5px solid #555;background:#fff;"></div>
<div class="t" style="left:25.6px;top:26.78px;font-size:9.2px;color:#444;">5 : Device Response</div>
<div style="position:absolute;left:9px;top:42.12px;width:7px;height:1px;background:#8a8a8a;"></div>
<div style="position:absolute;left:17.1px;top:40.32px;box-sizing:border-box;width:6.2px;height:4.8px;border-radius:1px;border:1px solid #c8c8c8;border-top:1.5px solid #555;background:#fff;"></div>
<div class="t" style="left:25.6px;top:39.12px;font-size:9.2px;color:#444;">6 : HMI Connection</div>
<div style="position:absolute;left:9px;top:54.46px;width:7px;height:1px;background:#8a8a8a;"></div>
<div style="position:absolute;left:17.1px;top:52.66px;box-sizing:border-box;width:6.2px;height:4.8px;border-radius:1px;border:1px solid #c8c8c8;border-top:1.5px solid #555;background:#fff;"></div>
<div class="t" style="left:25.6px;top:51.46px;font-size:9.2px;color:#444;">7 : Password Restriction</div>
<div style="position:absolute;left:9px;top:66.8px;width:7px;height:1px;background:#8a8a8a;"></div>
<div style="position:absolute;left:17.1px;top:65.0px;box-sizing:border-box;width:6.2px;height:4.8px;border-radius:1px;border:1px solid #c8c8c8;border-top:1.5px solid #555;background:#fff;"></div>
<div class="t" style="left:25.6px;top:63.8px;font-size:9.2px;color:#444;">8 : Storage Space Insufficient</div>
<div style="position:absolute;left:9px;top:79.14px;width:7px;height:1px;background:#8a8a8a;"></div>
<div style="position:absolute;left:17.1px;top:77.34px;box-sizing:border-box;width:6.2px;height:4.8px;border-radius:1px;border:1px solid #c8c8c8;border-top:1.5px solid #555;background:#fff;"></div>
<div class="t" style="left:25.6px;top:76.14px;font-size:9.2px;color:#444;">9 : Backup</div>
<div style="position:absolute;left:9px;top:91.48px;width:7px;height:1px;background:#8a8a8a;"></div>
<div style="position:absolute;left:5px;top:88.98px;width:6.6px;height:5.8px;background:#fff;border:1px solid #b8b8b8;box-sizing:border-box;"></div>
<div style="position:absolute;left:7.3px;top:91.38px;width:2px;height:1.2px;background:#3a5fc0;"></div>
<div style="position:absolute;left:7.8px;top:90.88px;width:1px;height:2.2px;background:#3a5fc0;"></div>
<div style="position:absolute;left:17.1px;top:89.68px;box-sizing:border-box;width:6.2px;height:4.8px;border-radius:1px;border:1px solid #c0c8d8;border-top:1.5px solid #3a6fd0;background:#fff;"></div>
<div class="t" style="left:25.6px;top:88.48px;font-size:9.2px;color:#444;">10 : WINDOW_010</div>
<div style="position:absolute;left:9px;top:103.82px;width:7px;height:1px;background:#8a8a8a;"></div>
<div style="position:absolute;left:17.1px;top:102.02px;box-sizing:border-box;width:6.2px;height:4.8px;border-radius:1px;border:1px solid #c8c8c8;border-top:1.5px solid #555;background:#fff;"></div>
<div class="t" style="left:25.6px;top:100.82px;font-size:9.2px;color:#444;">11 : Window_011 Setup</div>
<div style="position:absolute;left:9px;top:116.16px;width:7px;height:1px;background:#8a8a8a;"></div>
<div style="position:absolute;left:17.1px;top:114.36px;box-sizing:border-box;width:6.2px;height:4.8px;border-radius:1px;border:1px solid #c8c8c8;border-top:1.5px solid #555;background:#fff;"></div>
<div class="t" style="left:25.6px;top:113.16px;font-size:9.2px;color:#444;">12 : Window_012 Login</div>
<div style="position:absolute;left:9px;top:128.5px;width:7px;height:1px;background:#8a8a8a;"></div>
<div style="position:absolute;left:17.1px;top:126.7px;box-sizing:border-box;width:6.2px;height:4.8px;border-radius:1px;border:1px solid #d8d8d8;background:#fff;"></div>
<div class="t" style="left:25.6px;top:125.5px;font-size:9.2px;color:#444;">13</div>
<div style="position:absolute;left:9px;top:140.84px;width:7px;height:1px;background:#8a8a8a;"></div>
<div style="position:absolute;left:17.1px;top:139.04px;box-sizing:border-box;width:6.2px;height:4.8px;border-radius:1px;border:1px solid #d8d8d8;background:#fff;"></div>
<div class="t" style="left:25.6px;top:137.84px;font-size:9.2px;color:#444;">14</div>
<div style="position:absolute;left:9px;top:153.18px;width:7px;height:1px;background:#8a8a8a;"></div>
<div style="position:absolute;left:17.1px;top:151.38px;box-sizing:border-box;width:6.2px;height:4.8px;border-radius:1px;border:1px solid #d8d8d8;background:#fff;"></div>
<div class="t" style="left:25.6px;top:150.18px;font-size:9.2px;color:#444;">15</div>
<div style="position:absolute;left:9px;top:165.52px;width:7px;height:1px;background:#8a8a8a;"></div>
<div style="position:absolute;left:17.1px;top:163.72px;box-sizing:border-box;width:6.2px;height:4.8px;border-radius:1px;border:1px solid #d8d8d8;background:#fff;"></div>
<div class="t" style="left:25.6px;top:162.52px;font-size:9.2px;color:#444;">16</div>
<div style="position:absolute;left:9px;top:177.86px;width:7px;height:1px;background:#8a8a8a;"></div>
<div style="position:absolute;left:17.1px;top:176.06px;box-sizing:border-box;width:6.2px;height:4.8px;border-radius:1px;border:1px solid #d8d8d8;background:#fff;"></div>
<div class="t" style="left:25.6px;top:174.86px;font-size:9.2px;color:#444;">17</div>
<div style="position:absolute;left:9px;top:190.2px;width:7px;height:1px;background:#8a8a8a;"></div>
<div style="position:absolute;left:17.1px;top:188.4px;box-sizing:border-box;width:6.2px;height:4.8px;border-radius:1px;border:1px solid #d8d8d8;background:#fff;"></div>
<div class="t" style="left:25.6px;top:187.2px;font-size:9.2px;color:#444;">18</div>
<div style="position:absolute;left:9px;top:202.54px;width:7px;height:1px;background:#8a8a8a;"></div>
<div style="position:absolute;left:17.1px;top:200.74px;box-sizing:border-box;width:6.2px;height:4.8px;border-radius:1px;border:1px solid #d8d8d8;background:#fff;"></div>
<div class="t" style="left:25.6px;top:199.54px;font-size:9.2px;color:#444;">19</div>
<div style="position:absolute;left:9px;top:214.88px;width:7px;height:1px;background:#8a8a8a;"></div>
<div style="position:absolute;left:17.1px;top:213.08px;box-sizing:border-box;width:6.2px;height:4.8px;border-radius:1px;border:1px solid #d8d8d8;background:#fff;"></div>
<div class="t" style="left:25.6px;top:211.88px;font-size:9.2px;color:#444;">20</div>
<div style="position:absolute;left:9px;top:227.22px;width:7px;height:1px;background:#8a8a8a;"></div>
<div style="position:absolute;left:17.1px;top:225.42px;box-sizing:border-box;width:6.2px;height:4.8px;border-radius:1px;border:1px solid #d8d8d8;background:#fff;"></div>
<div class="t" style="left:25.6px;top:224.22px;font-size:9.2px;color:#444;">21</div>
<div style="position:absolute;left:9px;top:239.56px;width:7px;height:1px;background:#8a8a8a;"></div>
<div style="position:absolute;left:17.1px;top:237.76px;box-sizing:border-box;width:6.2px;height:4.8px;border-radius:1px;border:1px solid #d8d8d8;background:#fff;"></div>
<div class="t" style="left:25.6px;top:236.56px;font-size:9.2px;color:#444;">22</div>
<div style="position:absolute;left:9px;top:251.9px;width:7px;height:1px;background:#8a8a8a;"></div>
<div style="position:absolute;left:17.1px;top:250.1px;box-sizing:border-box;width:6.2px;height:4.8px;border-radius:1px;border:1px solid #d8d8d8;background:#fff;"></div>
<div class="t" style="left:25.6px;top:248.9px;font-size:9.2px;color:#444;">23</div>
<div style="position:absolute;left:9px;top:264.24px;width:7px;height:1px;background:#8a8a8a;"></div>
<div style="position:absolute;left:17.1px;top:262.44px;box-sizing:border-box;width:6.2px;height:4.8px;border-radius:1px;border:1px solid #d8d8d8;background:#fff;"></div>
<div class="t" style="left:25.6px;top:261.24px;font-size:9.2px;color:#444;">24</div>
<div style="position:absolute;left:9px;top:276.58px;width:7px;height:1px;background:#8a8a8a;"></div>
<div style="position:absolute;left:17.1px;top:274.78px;box-sizing:border-box;width:6.2px;height:4.8px;border-radius:1px;border:1px solid #d8d8d8;background:#fff;"></div>
<div class="t" style="left:25.6px;top:273.58px;font-size:9.2px;color:#444;">25</div>
<div style="position:absolute;left:9px;top:288.92px;width:7px;height:1px;background:#8a8a8a;"></div>
<div style="position:absolute;left:17.1px;top:287.12px;box-sizing:border-box;width:6.2px;height:4.8px;border-radius:1px;border:1px solid #d8d8d8;background:#fff;"></div>
<div class="t" style="left:25.6px;top:285.92px;font-size:9.2px;color:#444;">26</div>
<div style="position:absolute;left:9px;top:301.26px;width:7px;height:1px;background:#8a8a8a;"></div>
<div style="position:absolute;left:17.1px;top:299.46px;box-sizing:border-box;width:6.2px;height:4.8px;border-radius:1px;border:1px solid #d8d8d8;background:#fff;"></div>
<div class="t" style="left:25.6px;top:298.26px;font-size:9.2px;color:#444;">27</div>
<div style="position:absolute;left:9px;top:313.6px;width:7px;height:1px;background:#8a8a8a;"></div>
<div style="position:absolute;left:17.1px;top:311.8px;box-sizing:border-box;width:6.2px;height:4.8px;border-radius:1px;border:1px solid #d8d8d8;background:#fff;"></div>
<div class="t" style="left:25.6px;top:310.6px;font-size:9.2px;color:#444;">28</div>
<div style="position:absolute;left:9px;top:325.94px;width:7px;height:1px;background:#8a8a8a;"></div>
<div style="position:absolute;left:17.1px;top:324.14px;box-sizing:border-box;width:6.2px;height:4.8px;border-radius:1px;border:1px solid #d8d8d8;background:#fff;"></div>
<div class="t" style="left:25.6px;top:322.94px;font-size:9.2px;color:#444;">29</div>
<div style="position:absolute;left:9px;top:338.28px;width:7px;height:1px;background:#8a8a8a;"></div>
<div style="position:absolute;left:17.1px;top:336.48px;box-sizing:border-box;width:6.2px;height:4.8px;border-radius:1px;border:1px solid #d8d8d8;background:#fff;"></div>
<div class="t" style="left:25.6px;top:335.28px;font-size:9.2px;color:#444;">30</div>
<div style="position:absolute;left:9px;top:350.62px;width:7px;height:1px;background:#8a8a8a;"></div>
<div style="position:absolute;left:17.1px;top:348.82px;box-sizing:border-box;width:6.2px;height:4.8px;border-radius:1px;border:1px solid #d8d8d8;background:#fff;"></div>
<div class="t" style="left:25.6px;top:347.62px;font-size:9.2px;color:#444;">31</div>
<div style="position:absolute;left:9px;top:362.96px;width:7px;height:1px;background:#8a8a8a;"></div>
<div style="position:absolute;left:17.1px;top:361.16px;box-sizing:border-box;width:6.2px;height:4.8px;border-radius:1px;border:1px solid #d8d8d8;background:#fff;"></div>
<div class="t" style="left:25.6px;top:359.96px;font-size:9.2px;color:#444;">32</div>
<div style="position:absolute;left:9px;top:375.3px;width:7px;height:1px;background:#8a8a8a;"></div>
<div style="position:absolute;left:17.1px;top:373.5px;box-sizing:border-box;width:6.2px;height:4.8px;border-radius:1px;border:1px solid #d8d8d8;background:#fff;"></div>
<div class="t" style="left:25.6px;top:372.3px;font-size:9.2px;color:#444;">33</div>
<div style="position:absolute;left:9px;top:387.64px;width:7px;height:1px;background:#8a8a8a;"></div>
<div style="position:absolute;left:17.1px;top:385.84px;box-sizing:border-box;width:6.2px;height:4.8px;border-radius:1px;border:1px solid #d8d8d8;background:#fff;"></div>
<div class="t" style="left:25.6px;top:384.64px;font-size:9.2px;color:#444;">34</div>
<div style="position:absolute;left:9px;top:399.98px;width:7px;height:1px;background:#8a8a8a;"></div>
<div style="position:absolute;left:17.1px;top:398.18px;box-sizing:border-box;width:6.2px;height:4.8px;border-radius:1px;border:1px solid #d8d8d8;background:#fff;"></div>
<div class="t" style="left:25.6px;top:396.98px;font-size:9.2px;color:#444;">35</div>
<div style="position:absolute;left:9px;top:412.32px;width:7px;height:1px;background:#8a8a8a;"></div>
<div style="position:absolute;left:17.1px;top:410.52px;box-sizing:border-box;width:6.2px;height:4.8px;border-radius:1px;border:1px solid #d8d8d8;background:#fff;"></div>
<div class="t" style="left:25.6px;top:409.32px;font-size:9.2px;color:#444;">36</div>
<div style="position:absolute;left:9px;top:424.66px;width:7px;height:1px;background:#8a8a8a;"></div>
<div style="position:absolute;left:17.1px;top:422.86px;box-sizing:border-box;width:6.2px;height:4.8px;border-radius:1px;border:1px solid #d8d8d8;background:#fff;"></div>
<div class="t" style="left:25.6px;top:421.66px;font-size:9.2px;color:#444;">37</div>
<div style="position:absolute;left:9px;top:437.0px;width:7px;height:1px;background:#8a8a8a;"></div>
<div style="position:absolute;left:17.1px;top:435.2px;box-sizing:border-box;width:6.2px;height:4.8px;border-radius:1px;border:1px solid #d8d8d8;background:#fff;"></div>
<div class="t" style="left:25.6px;top:434.0px;font-size:9.2px;color:#444;">38</div>
<div style="position:absolute;left:9px;top:449.34px;width:7px;height:1px;background:#8a8a8a;"></div>
<div style="position:absolute;left:17.1px;top:447.54px;box-sizing:border-box;width:6.2px;height:4.8px;border-radius:1px;border:1px solid #d8d8d8;background:#fff;"></div>
<div class="t" style="left:25.6px;top:446.34px;font-size:9.2px;color:#444;">39</div>
<div style="position:absolute;left:9px;top:461.68px;width:7px;height:1px;background:#8a8a8a;"></div>
<div style="position:absolute;left:17.1px;top:459.88px;box-sizing:border-box;width:6.2px;height:4.8px;border-radius:1px;border:1px solid #d8d8d8;background:#fff;"></div>
<div class="t" style="left:25.6px;top:458.68px;font-size:9.2px;color:#444;">40</div>
<div style="position:absolute;left:9px;top:474.02px;width:7px;height:1px;background:#8a8a8a;"></div>
<div style="position:absolute;left:17.1px;top:472.22px;box-sizing:border-box;width:6.2px;height:4.8px;border-radius:1px;border:1px solid #d8d8d8;background:#fff;"></div>
<div class="t" style="left:25.6px;top:471.02px;font-size:9.2px;color:#444;">41</div>
<div style="position:absolute;left:9px;top:486.36px;width:7px;height:1px;background:#8a8a8a;"></div>
<div style="position:absolute;left:17.1px;top:484.56px;box-sizing:border-box;width:6.2px;height:4.8px;border-radius:1px;border:1px solid #d8d8d8;background:#fff;"></div>
<div class="t" style="left:25.6px;top:483.36px;font-size:9.2px;color:#444;">42</div>
<div style="position:absolute;left:9px;top:498.7px;width:7px;height:1px;background:#8a8a8a;"></div>
<div style="position:absolute;left:17.1px;top:496.9px;box-sizing:border-box;width:6.2px;height:4.8px;border-radius:1px;border:1px solid #d8d8d8;background:#fff;"></div>
<div class="t" style="left:25.6px;top:495.7px;font-size:9.2px;color:#444;">43</div>
<div style="position:absolute;left:9px;top:511.04px;width:7px;height:1px;background:#8a8a8a;"></div>
<div style="position:absolute;left:17.1px;top:509.24px;box-sizing:border-box;width:6.2px;height:4.8px;border-radius:1px;border:1px solid #d8d8d8;background:#fff;"></div>
<div class="t" style="left:25.6px;top:508.04px;font-size:9.2px;color:#444;">44</div>
<div style="position:absolute;left:9px;top:523.38px;width:7px;height:1px;background:#8a8a8a;"></div>
<div style="position:absolute;left:17.1px;top:521.58px;box-sizing:border-box;width:6.2px;height:4.8px;border-radius:1px;border:1px solid #d8d8d8;background:#fff;"></div>
<div class="t" style="left:25.6px;top:520.38px;font-size:9.2px;color:#444;">45</div>
<div style="position:absolute;left:9px;top:535.72px;width:7px;height:1px;background:#8a8a8a;"></div>
<div style="position:absolute;left:17.1px;top:533.92px;box-sizing:border-box;width:6.2px;height:4.8px;border-radius:1px;border:1px solid #d8d8d8;background:#fff;"></div>
<div class="t" style="left:25.6px;top:532.72px;font-size:9.2px;color:#444;">46</div>
<div style="position:absolute;left:9px;top:548.06px;width:7px;height:1px;background:#8a8a8a;"></div>
<div style="position:absolute;left:17.1px;top:546.26px;box-sizing:border-box;width:6.2px;height:4.8px;border-radius:1px;border:1px solid #d8d8d8;background:#fff;"></div>
<div class="t" style="left:25.6px;top:545.06px;font-size:9.2px;color:#444;">47</div>
<div style="position:absolute;left:9px;top:560.4px;width:7px;height:1px;background:#8a8a8a;"></div>
<div style="position:absolute;left:17.1px;top:558.6px;box-sizing:border-box;width:6.2px;height:4.8px;border-radius:1px;border:1px solid #d8d8d8;background:#fff;"></div>
<div class="t" style="left:25.6px;top:557.4px;font-size:9.2px;color:#444;">48</div>
<div style="position:absolute;left:9px;top:572.74px;width:7px;height:1px;background:#8a8a8a;"></div>
<div style="position:absolute;left:17.1px;top:570.94px;box-sizing:border-box;width:6.2px;height:4.8px;border-radius:1px;border:1px solid #d8d8d8;background:#fff;"></div>
<div class="t" style="left:25.6px;top:569.74px;font-size:9.2px;color:#444;">49</div>
<div style="position:absolute;left:9px;top:585.08px;width:7px;height:1px;background:#8a8a8a;"></div>
<div style="position:absolute;left:17.1px;top:583.28px;box-sizing:border-box;width:6.2px;height:4.8px;border-radius:1px;border:1px solid #c8c8c8;border-top:1.5px solid #555;background:#fff;"></div>
<div class="t" style="left:25.6px;top:582.08px;font-size:9.2px;color:#444;">50 : Keypad 1 - Integer</div>
<div style="position:absolute;left:9px;top:597.42px;width:7px;height:1px;background:#8a8a8a;"></div>
<div style="position:absolute;left:17.1px;top:595.62px;box-sizing:border-box;width:6.2px;height:4.8px;border-radius:1px;border:1px solid #c8c8c8;border-top:1.5px solid #555;background:#fff;"></div>
<div class="t" style="left:25.6px;top:594.42px;font-size:9.2px;color:#444;">51 : Keypad 2 - Integer</div>
<div style="position:absolute;left:9px;top:609.76px;width:7px;height:1px;background:#8a8a8a;"></div>
<div style="position:absolute;left:17.1px;top:607.96px;box-sizing:border-box;width:6.2px;height:4.8px;border-radius:1px;border:1px solid #c8c8c8;border-top:1.5px solid #555;background:#fff;"></div>
<div class="t" style="left:25.6px;top:606.76px;font-size:9.2px;color:#444;">52 : Keypad 3 - Integer</div>
<div style="position:absolute;left:9px;top:622.1px;width:7px;height:1px;background:#8a8a8a;"></div>
<div style="position:absolute;left:17.1px;top:620.3px;box-sizing:border-box;width:6.2px;height:4.8px;border-radius:1px;border:1px solid #c8c8c8;border-top:1.5px solid #555;background:#fff;"></div>
<div class="t" style="left:25.6px;top:619.1px;font-size:9.2px;color:#444;">53 : Keypad 4 - Integer</div>
<div style="position:absolute;left:9px;top:634.44px;width:7px;height:1px;background:#8a8a8a;"></div>
<div style="position:absolute;left:17.1px;top:632.64px;box-sizing:border-box;width:6.2px;height:4.8px;border-radius:1px;border:1px solid #c8c8c8;border-top:1.5px solid #555;background:#fff;"></div>
<div class="t" style="left:25.6px;top:631.44px;font-size:9.2px;color:#444;">54 : Keypad 5 - Integer</div>
<div style="position:absolute;left:9px;top:646.78px;width:7px;height:1px;background:#8a8a8a;"></div>
<div style="position:absolute;left:17.1px;top:644.98px;box-sizing:border-box;width:6.2px;height:4.8px;border-radius:1px;border:1px solid #c8c8c8;border-top:1.5px solid #555;background:#fff;"></div>
<div class="t" style="left:25.6px;top:643.78px;font-size:9.2px;color:#444;">55 : Keypad 6 - Integer</div>
<div style="position:absolute;left:9px;top:659.12px;width:7px;height:1px;background:#8a8a8a;"></div>
<div style="position:absolute;left:17.1px;top:657.32px;box-sizing:border-box;width:6.2px;height:4.8px;border-radius:1px;border:1px solid #c8c8c8;border-top:1.5px solid #555;background:#fff;"></div>
<div class="t" style="left:25.6px;top:656.12px;font-size:9.2px;color:#444;">56 : Keypad 7 - HEX</div>
<div style="position:absolute;left:9px;top:671.46px;width:7px;height:1px;background:#8a8a8a;"></div>
<div style="position:absolute;left:17.1px;top:669.66px;box-sizing:border-box;width:6.2px;height:4.8px;border-radius:1px;border:1px solid #c8c8c8;border-top:1.5px solid #555;background:#fff;"></div>
<div class="t" style="left:25.6px;top:668.46px;font-size:9.2px;color:#444;">57 : Keypad 8 - Floating</div>
</div>
<div style="position:absolute;left:0px;top:794px;width:198px;height:14px;background:#eceef6;"></div>
<div style="position:absolute;left:42px;top:794px;width:65px;height:14px;background:#f7f7f7;"></div>
<div class="t" style="left:5px;top:797.5px;font-size:8.7px;color:#777;">Address</div>
<div class="t" style="left:47px;top:797.5px;font-size:8.7px;color:#333;">Windows Tree</div>
<div class="t" style="left:112px;top:797.5px;font-size:8.7px;color:#777;">Windows Preview</div>
<div style="position:absolute;left:198px;top:104px;width:1014px;height:16px;background:#eef1f9;"></div>
<svg style="position:absolute;left:206px;top:107px;" width="6" height="9" viewBox="0 0 6 9"><path d="M5 0.5 L0.8 4.5 L5 8.5 Z" fill="none" stroke="#555"/></svg>
<svg style="position:absolute;left:1200px;top:107px;" width="6" height="9" viewBox="0 0 6 9"><path d="M1 0.5 L5.2 4.5 L1 8.5 Z" fill="none" stroke="#555"/></svg>
<svg style="position:absolute;left:212px;top:104px;" width="117" height="16" viewBox="0 0 117 16"><defs><linearGradient id="tg" x1="0" y1="0" x2="0" y2="1"><stop offset="0" stop-color="#d2f1fc"/><stop offset="1" stop-color="#a9d9f1"/></linearGradient></defs><path d="M0 16 L13 1 H116 V16 Z" fill="url(#tg)"/></svg>
<div class="t" style="left:233px;top:108px;font-size:9px;color:#111;font-weight:bold;">10 - WINDOW_010</div>
<svg style="position:absolute;left:318px;top:108px;" width="8" height="8" viewBox="0 0 8 8"><path d="M0.8 0.8 L7.2 7.2 M7.2 0.8 L0.8 7.2" stroke="#111" stroke-width="1.4"/></svg>
<div style="position:absolute;left:201px;top:119.5px;width:1009.5px;height:689.5px;border:2.2px solid #a9cbe9;box-sizing:border-box;background:#f0f0f0;"></div>
<div style="position:absolute;left:203.5px;top:121.5px;width:1004px;height:7px;background:#f0f0f0;"></div>
<div style="position:absolute;left:307px;top:121px;width:791px;height:7px;background:#fff;"></div>
<svg style="position:absolute;left:307px;top:121px;" width="792" height="7" viewBox="0 0 792 7"><rect x="0.00" y="2.00" width="0.6" height="5" fill="#888"/><rect x="3.86" y="5.70" width="0.6" height="1.3" fill="#888"/><rect x="7.73" y="4.80" width="0.6" height="2.2" fill="#888"/><rect x="11.59" y="5.70" width="0.6" height="1.3" fill="#888"/><rect x="15.45" y="4.80" width="0.6" height="2.2" fill="#888"/><rect x="19.31" y="5.70" width="0.6" height="1.3" fill="#888"/><rect x="23.18" y="4.80" width="0.6" height="2.2" fill="#888"/><rect x="27.04" y="5.70" width="0.6" height="1.3" fill="#888"/><rect x="30.90" y="4.80" width="0.6" height="2.2" fill="#888"/><rect x="34.76" y="5.70" width="0.6" height="1.3" fill="#888"/><rect x="38.62" y="4.80" width="0.6" height="2.2" fill="#888"/><rect x="42.49" y="5.70" width="0.6" height="1.3" fill="#888"/><rect x="46.35" y="4.80" width="0.6" height="2.2" fill="#888"/><rect x="50.21" y="5.70" width="0.6" height="1.3" fill="#888"/><rect x="54.07" y="4.80" width="0.6" height="2.2" fill="#888"/><rect x="57.94" y="5.70" width="0.6" height="1.3" fill="#888"/><rect x="61.80" y="4.80" width="0.6" height="2.2" fill="#888"/><rect x="65.66" y="5.70" width="0.6" height="1.3" fill="#888"/><rect x="69.52" y="4.80" width="0.6" height="2.2" fill="#888"/><rect x="73.39" y="5.70" width="0.6" height="1.3" fill="#888"/><rect x="77.25" y="2.00" width="0.6" height="5" fill="#888"/><rect x="81.11" y="5.70" width="0.6" height="1.3" fill="#888"/><rect x="84.98" y="4.80" width="0.6" height="2.2" fill="#888"/><rect x="88.84" y="5.70" width="0.6" height="1.3" fill="#888"/><rect x="92.70" y="4.80" width="0.6" height="2.2" fill="#888"/><rect x="96.56" y="5.70" width="0.6" height="1.3" fill="#888"/><rect x="100.43" y="4.80" width="0.6" height="2.2" fill="#888"/><rect x="104.29" y="5.70" width="0.6" height="1.3" fill="#888"/><rect x="108.15" y="4.80" width="0.6" height="2.2" fill="#888"/><rect x="112.01" y="5.70" width="0.6" height="1.3" fill="#888"/><rect x="115.88" y="4.80" width="0.6" height="2.2" fill="#888"/><rect x="119.74" y="5.70" width="0.6" height="1.3" fill="#888"/><rect x="123.60" y="4.80" width="0.6" height="2.2" fill="#888"/><rect x="127.46" y="5.70" width="0.6" height="1.3" fill="#888"/><rect x="131.32" y="4.80" width="0.6" height="2.2" fill="#888"/><rect x="135.19" y="5.70" width="0.6" height="1.3" fill="#888"/><rect x="139.05" y="4.80" width="0.6" height="2.2" fill="#888"/><rect x="142.91" y="5.70" width="0.6" height="1.3" fill="#888"/><rect x="146.77" y="4.80" width="0.6" height="2.2" fill="#888"/><rect x="150.64" y="5.70" width="0.6" height="1.3" fill="#888"/><rect x="154.50" y="2.00" width="0.6" height="5" fill="#888"/><rect x="158.36" y="5.70" width="0.6" height="1.3" fill="#888"/><rect x="162.23" y="4.80" width="0.6" height="2.2" fill="#888"/><rect x="166.09" y="5.70" width="0.6" height="1.3" fill="#888"/><rect x="169.95" y="4.80" width="0.6" height="2.2" fill="#888"/><rect x="173.81" y="5.70" width="0.6" height="1.3" fill="#888"/><rect x="177.67" y="4.80" width="0.6" height="2.2" fill="#888"/><rect x="181.54" y="5.70" width="0.6" height="1.3" fill="#888"/><rect x="185.40" y="4.80" width="0.6" height="2.2" fill="#888"/><rect x="189.26" y="5.70" width="0.6" height="1.3" fill="#888"/><rect x="193.12" y="4.80" width="0.6" height="2.2" fill="#888"/><rect x="196.99" y="5.70" width="0.6" height="1.3" fill="#888"/><rect x="200.85" y="4.80" width="0.6" height="2.2" fill="#888"/><rect x="204.71" y="5.70" width="0.6" height="1.3" fill="#888"/><rect x="208.58" y="4.80" width="0.6" height="2.2" fill="#888"/><rect x="212.44" y="5.70" width="0.6" height="1.3" fill="#888"/><rect x="216.30" y="4.80" width="0.6" height="2.2" fill="#888"/><rect x="220.16" y="5.70" width="0.6" height="1.3" fill="#888"/><rect x="224.02" y="4.80" width="0.6" height="2.2" fill="#888"/><rect x="227.89" y="5.70" width="0.6" height="1.3" fill="#888"/><rect x="231.75" y="2.00" width="0.6" height="5" fill="#888"/><rect x="235.61" y="5.70" width="0.6" height="1.3" fill="#888"/><rect x="239.48" y="4.80" width="0.6" height="2.2" fill="#888"/><rect x="243.34" y="5.70" width="0.6" height="1.3" fill="#888"/><rect x="247.20" y="4.80" width="0.6" height="2.2" fill="#888"/><rect x="251.06" y="5.70" width="0.6" height="1.3" fill="#888"/><rect x="254.92" y="4.80" width="0.6" height="2.2" fill="#888"/><rect x="258.79" y="5.70" width="0.6" height="1.3" fill="#888"/><rect x="262.65" y="4.80" width="0.6" height="2.2" fill="#888"/><rect x="266.51" y="5.70" width="0.6" height="1.3" fill="#888"/><rect x="270.38" y="4.80" width="0.6" height="2.2" fill="#888"/><rect x="274.24" y="5.70" width="0.6" height="1.3" fill="#888"/><rect x="278.10" y="4.80" width="0.6" height="2.2" fill="#888"/><rect x="281.96" y="5.70" width="0.6" height="1.3" fill="#888"/><rect x="285.83" y="4.80" width="0.6" height="2.2" fill="#888"/><rect x="289.69" y="5.70" width="0.6" height="1.3" fill="#888"/><rect x="293.55" y="4.80" width="0.6" height="2.2" fill="#888"/><rect x="297.41" y="5.70" width="0.6" height="1.3" fill="#888"/><rect x="301.27" y="4.80" width="0.6" height="2.2" fill="#888"/><rect x="305.14" y="5.70" width="0.6" height="1.3" fill="#888"/><rect x="309.00" y="2.00" width="0.6" height="5" fill="#888"/><rect x="312.86" y="5.70" width="0.6" height="1.3" fill="#888"/><rect x="316.72" y="4.80" width="0.6" height="2.2" fill="#888"/><rect x="320.59" y="5.70" width="0.6" height="1.3" fill="#888"/><rect x="324.45" y="4.80" width="0.6" height="2.2" fill="#888"/><rect x="328.31" y="5.70" width="0.6" height="1.3" fill="#888"/><rect x="332.17" y="4.80" width="0.6" height="2.2" fill="#888"/><rect x="336.04" y="5.70" width="0.6" height="1.3" fill="#888"/><rect x="339.90" y="4.80" width="0.6" height="2.2" fill="#888"/><rect x="343.76" y="5.70" width="0.6" height="1.3" fill="#888"/><rect x="347.62" y="4.80" width="0.6" height="2.2" fill="#888"/><rect x="351.49" y="5.70" width="0.6" height="1.3" fill="#888"/><rect x="355.35" y="4.80" width="0.6" height="2.2" fill="#888"/><rect x="359.21" y="5.70" width="0.6" height="1.3" fill="#888"/><rect x="363.08" y="4.80" width="0.6" height="2.2" fill="#888"/><rect x="366.94" y="5.70" width="0.6" height="1.3" fill="#888"/><rect x="370.80" y="4.80" width="0.6" height="2.2" fill="#888"/><rect x="374.66" y="5.70" width="0.6" height="1.3" fill="#888"/><rect x="378.52" y="4.80" width="0.6" height="2.2" fill="#888"/><rect x="382.39" y="5.70" width="0.6" height="1.3" fill="#888"/><rect x="386.25" y="2.00" width="0.6" height="5" fill="#888"/><rect x="390.11" y="5.70" width="0.6" height="1.3" fill="#888"/><rect x="393.97" y="4.80" width="0.6" height="2.2" fill="#888"/><rect x="397.84" y="5.70" width="0.6" height="1.3" fill="#888"/><rect x="401.70" y="4.80" width="0.6" height="2.2" fill="#888"/><rect x="405.56" y="5.70" width="0.6" height="1.3" fill="#888"/><rect x="409.42" y="4.80" width="0.6" height="2.2" fill="#888"/><rect x="413.29" y="5.70" width="0.6" height="1.3" fill="#888"/><rect x="417.15" y="4.80" width="0.6" height="2.2" fill="#888"/><rect x="421.01" y="5.70" width="0.6" height="1.3" fill="#888"/><rect x="424.88" y="4.80" width="0.6" height="2.2" fill="#888"/><rect x="428.74" y="5.70" width="0.6" height="1.3" fill="#888"/><rect x="432.60" y="4.80" width="0.6" height="2.2" fill="#888"/><rect x="436.46" y="5.70" width="0.6" height="1.3" fill="#888"/><rect x="440.33" y="4.80" width="0.6" height="2.2" fill="#888"/><rect x="444.19" y="5.70" width="0.6" height="1.3" fill="#888"/><rect x="448.05" y="4.80" width="0.6" height="2.2" fill="#888"/><rect x="451.91" y="5.70" width="0.6" height="1.3" fill="#888"/><rect x="455.77" y="4.80" width="0.6" height="2.2" fill="#888"/><rect x="459.64" y="5.70" width="0.6" height="1.3" fill="#888"/><rect x="463.50" y="2.00" width="0.6" height="5" fill="#888"/><rect x="467.36" y="5.70" width="0.6" height="1.3" fill="#888"/><rect x="471.22" y="4.80" width="0.6" height="2.2" fill="#888"/><rect x="475.09" y="5.70" width="0.6" height="1.3" fill="#888"/><rect x="478.95" y="4.80" width="0.6" height="2.2" fill="#888"/><rect x="482.81" y="5.70" width="0.6" height="1.3" fill="#888"/><rect x="486.67" y="4.80" width="0.6" height="2.2" fill="#888"/><rect x="490.54" y="5.70" width="0.6" height="1.3" fill="#888"/><rect x="494.40" y="4.80" width="0.6" height="2.2" fill="#888"/><rect x="498.26" y="5.70" width="0.6" height="1.3" fill="#888"/><rect x="502.12" y="4.80" width="0.6" height="2.2" fill="#888"/><rect x="505.99" y="5.70" width="0.6" height="1.3" fill="#888"/><rect x="509.85" y="4.80" width="0.6" height="2.2" fill="#888"/><rect x="513.71" y="5.70" width="0.6" height="1.3" fill="#888"/><rect x="517.57" y="4.80" width="0.6" height="2.2" fill="#888"/><rect x="521.44" y="5.70" width="0.6" height="1.3" fill="#888"/><rect x="525.30" y="4.80" width="0.6" height="2.2" fill="#888"/><rect x="529.16" y="5.70" width="0.6" height="1.3" fill="#888"/><rect x="533.02" y="4.80" width="0.6" height="2.2" fill="#888"/><rect x="536.89" y="5.70" width="0.6" height="1.3" fill="#888"/><rect x="540.75" y="2.00" width="0.6" height="5" fill="#888"/><rect x="544.61" y="5.70" width="0.6" height="1.3" fill="#888"/><rect x="548.48" y="4.80" width="0.6" height="2.2" fill="#888"/><rect x="552.34" y="5.70" width="0.6" height="1.3" fill="#888"/><rect x="556.20" y="4.80" width="0.6" height="2.2" fill="#888"/><rect x="560.06" y="5.70" width="0.6" height="1.3" fill="#888"/><rect x="563.92" y="4.80" width="0.6" height="2.2" fill="#888"/><rect x="567.79" y="5.70" width="0.6" height="1.3" fill="#888"/><rect x="571.65" y="4.80" width="0.6" height="2.2" fill="#888"/><rect x="575.51" y="5.70" width="0.6" height="1.3" fill="#888"/><rect x="579.38" y="4.80" width="0.6" height="2.2" fill="#888"/><rect x="583.24" y="5.70" width="0.6" height="1.3" fill="#888"/><rect x="587.10" y="4.80" width="0.6" height="2.2" fill="#888"/><rect x="590.96" y="5.70" width="0.6" height="1.3" fill="#888"/><rect x="594.82" y="4.80" width="0.6" height="2.2" fill="#888"/><rect x="598.69" y="5.70" width="0.6" height="1.3" fill="#888"/><rect x="602.55" y="4.80" width="0.6" height="2.2" fill="#888"/><rect x="606.41" y="5.70" width="0.6" height="1.3" fill="#888"/><rect x="610.27" y="4.80" width="0.6" height="2.2" fill="#888"/><rect x="614.14" y="5.70" width="0.6" height="1.3" fill="#888"/><rect x="618.00" y="2.00" width="0.6" height="5" fill="#888"/><rect x="621.86" y="5.70" width="0.6" height="1.3" fill="#888"/><rect x="625.73" y="4.80" width="0.6" height="2.2" fill="#888"/><rect x="629.59" y="5.70" width="0.6" height="1.3" fill="#888"/><rect x="633.45" y="4.80" width="0.6" height="2.2" fill="#888"/><rect x="637.31" y="5.70" width="0.6" height="1.3" fill="#888"/><rect x="641.17" y="4.80" width="0.6" height="2.2" fill="#888"/><rect x="645.04" y="5.70" width="0.6" height="1.3" fill="#888"/><rect x="648.90" y="4.80" width="0.6" height="2.2" fill="#888"/><rect x="652.76" y="5.70" width="0.6" height="1.3" fill="#888"/><rect x="656.62" y="4.80" width="0.6" height="2.2" fill="#888"/><rect x="660.49" y="5.70" width="0.6" height="1.3" fill="#888"/><rect x="664.35" y="4.80" width="0.6" height="2.2" fill="#888"/><rect x="668.21" y="5.70" width="0.6" height="1.3" fill="#888"/><rect x="672.07" y="4.80" width="0.6" height="2.2" fill="#888"/><rect x="675.94" y="5.70" width="0.6" height="1.3" fill="#888"/><rect x="679.80" y="4.80" width="0.6" height="2.2" fill="#888"/><rect x="683.66" y="5.70" width="0.6" height="1.3" fill="#888"/><rect x="687.52" y="4.80" width="0.6" height="2.2" fill="#888"/><rect x="691.39" y="5.70" width="0.6" height="1.3" fill="#888"/><rect x="695.25" y="2.00" width="0.6" height="5" fill="#888"/><rect x="699.11" y="5.70" width="0.6" height="1.3" fill="#888"/><rect x="702.98" y="4.80" width="0.6" height="2.2" fill="#888"/><rect x="706.84" y="5.70" width="0.6" height="1.3" fill="#888"/><rect x="710.70" y="4.80" width="0.6" height="2.2" fill="#888"/><rect x="714.56" y="5.70" width="0.6" height="1.3" fill="#888"/><rect x="718.42" y="4.80" width="0.6" height="2.2" fill="#888"/><rect x="722.29" y="5.70" width="0.6" height="1.3" fill="#888"/><rect x="726.15" y="4.80" width="0.6" height="2.2" fill="#888"/><rect x="730.01" y="5.70" width="0.6" height="1.3" fill="#888"/><rect x="733.88" y="4.80" width="0.6" height="2.2" fill="#888"/><rect x="737.74" y="5.70" width="0.6" height="1.3" fill="#888"/><rect x="741.60" y="4.80" width="0.6" height="2.2" fill="#888"/><rect x="745.46" y="5.70" width="0.6" height="1.3" fill="#888"/><rect x="749.32" y="4.80" width="0.6" height="2.2" fill="#888"/><rect x="753.19" y="5.70" width="0.6" height="1.3" fill="#888"/><rect x="757.05" y="4.80" width="0.6" height="2.2" fill="#888"/><rect x="760.91" y="5.70" width="0.6" height="1.3" fill="#888"/><rect x="764.78" y="4.80" width="0.6" height="2.2" fill="#888"/><rect x="768.64" y="5.70" width="0.6" height="1.3" fill="#888"/><rect x="772.50" y="2.00" width="0.6" height="5" fill="#888"/><rect x="776.36" y="5.70" width="0.6" height="1.3" fill="#888"/><rect x="780.22" y="4.80" width="0.6" height="2.2" fill="#888"/><rect x="784.09" y="5.70" width="0.6" height="1.3" fill="#888"/><rect x="787.95" y="4.80" width="0.6" height="2.2" fill="#888"/></svg>
<div class="t" style="left:376.25px;top:121.5px;font-size:3.8px;color:#999;">100</div>
<div class="t" style="left:453.5px;top:121.5px;font-size:3.8px;color:#999;">200</div>
<div class="t" style="left:530.75px;top:121.5px;font-size:3.8px;color:#999;">300</div>
<div class="t" style="left:608.0px;top:121.5px;font-size:3.8px;color:#999;">400</div>
<div class="t" style="left:685.25px;top:121.5px;font-size:3.8px;color:#999;">500</div>
<div class="t" style="left:762.5px;top:121.5px;font-size:3.8px;color:#999;">600</div>
<div class="t" style="left:839.75px;top:121.5px;font-size:3.8px;color:#999;">700</div>
<div class="t" style="left:917.0px;top:121.5px;font-size:3.8px;color:#999;">800</div>
<div class="t" style="left:994.25px;top:121.5px;font-size:3.8px;color:#999;">900</div>
<div class="t" style="left:1071.5px;top:121.5px;font-size:3.8px;color:#999;">1000</div>
<div class="t" style="left:304.5px;top:121.5px;font-size:3.8px;color:#999;">0</div>
<div style="position:absolute;left:204px;top:121px;width:7px;height:7px;background:#fafafa;border:1px solid #ccc;box-sizing:border-box;"></div>
<div style="position:absolute;left:205px;top:122px;width:4px;height:1.5px;background:#3a7bd5;"></div>
<div style="position:absolute;left:205px;top:123.5px;width:2px;height:2px;background:#e85a3a;"></div>
<div style="position:absolute;left:203.5px;top:128px;width:7.5px;height:666px;background:#f0f0f0;"></div>
<div style="position:absolute;left:204px;top:229px;width:7px;height:464px;background:#fff;"></div>
<svg style="position:absolute;left:204px;top:229px;" width="7" height="464" viewBox="0 0 7 464"><rect x="2.00" y="0.00" width="5" height="0.6" fill="#999"/><rect x="5.70" y="3.86" width="1.3" height="0.6" fill="#999"/><rect x="4.80" y="7.72" width="2.2" height="0.6" fill="#999"/><rect x="5.70" y="11.59" width="1.3" height="0.6" fill="#999"/><rect x="4.80" y="15.45" width="2.2" height="0.6" fill="#999"/><rect x="5.70" y="19.31" width="1.3" height="0.6" fill="#999"/><rect x="4.80" y="23.18" width="2.2" height="0.6" fill="#999"/><rect x="5.70" y="27.04" width="1.3" height="0.6" fill="#999"/><rect x="4.80" y="30.90" width="2.2" height="0.6" fill="#999"/><rect x="5.70" y="34.76" width="1.3" height="0.6" fill="#999"/><rect x="4.80" y="38.62" width="2.2" height="0.6" fill="#999"/><rect x="5.70" y="42.49" width="1.3" height="0.6" fill="#999"/><rect x="4.80" y="46.35" width="2.2" height="0.6" fill="#999"/><rect x="5.70" y="50.21" width="1.3" height="0.6" fill="#999"/><rect x="4.80" y="54.07" width="2.2" height="0.6" fill="#999"/><rect x="5.70" y="57.94" width="1.3" height="0.6" fill="#999"/><rect x="4.80" y="61.80" width="2.2" height="0.6" fill="#999"/><rect x="5.70" y="65.66" width="1.3" height="0.6" fill="#999"/><rect x="4.80" y="69.52" width="2.2" height="0.6" fill="#999"/><rect x="5.70" y="73.39" width="1.3" height="0.6" fill="#999"/><rect x="2.00" y="77.25" width="5" height="0.6" fill="#999"/><rect x="5.70" y="81.11" width="1.3" height="0.6" fill="#999"/><rect x="4.80" y="84.98" width="2.2" height="0.6" fill="#999"/><rect x="5.70" y="88.84" width="1.3" height="0.6" fill="#999"/><rect x="4.80" y="92.70" width="2.2" height="0.6" fill="#999"/><rect x="5.70" y="96.56" width="1.3" height="0.6" fill="#999"/><rect x="4.80" y="100.43" width="2.2" height="0.6" fill="#999"/><rect x="5.70" y="104.29" width="1.3" height="0.6" fill="#999"/><rect x="4.80" y="108.15" width="2.2" height="0.6" fill="#999"/><rect x="5.70" y="112.01" width="1.3" height="0.6" fill="#999"/><rect x="4.80" y="115.88" width="2.2" height="0.6" fill="#999"/><rect x="5.70" y="119.74" width="1.3" height="0.6" fill="#999"/><rect x="4.80" y="123.60" width="2.2" height="0.6" fill="#999"/><rect x="5.70" y="127.46" width="1.3" height="0.6" fill="#999"/><rect x="4.80" y="131.32" width="2.2" height="0.6" fill="#999"/><rect x="5.70" y="135.19" width="1.3" height="0.6" fill="#999"/><rect x="4.80" y="139.05" width="2.2" height="0.6" fill="#999"/><rect x="5.70" y="142.91" width="1.3" height="0.6" fill="#999"/><rect x="4.80" y="146.77" width="2.2" height="0.6" fill="#999"/><rect x="5.70" y="150.64" width="1.3" height="0.6" fill="#999"/><rect x="2.00" y="154.50" width="5" height="0.6" fill="#999"/><rect x="5.70" y="158.36" width="1.3" height="0.6" fill="#999"/><rect x="4.80" y="162.23" width="2.2" height="0.6" fill="#999"/><rect x="5.70" y="166.09" width="1.3" height="0.6" fill="#999"/><rect x="4.80" y="169.95" width="2.2" height="0.6" fill="#999"/><rect x="5.70" y="173.81" width="1.3" height="0.6" fill="#999"/><rect x="4.80" y="177.67" width="2.2" height="0.6" fill="#999"/><rect x="5.70" y="181.54" width="1.3" height="0.6" fill="#999"/><rect x="4.80" y="185.40" width="2.2" height="0.6" fill="#999"/><rect x="5.70" y="189.26" width="1.3" height="0.6" fill="#999"/><rect x="4.80" y="193.12" width="2.2" height="0.6" fill="#999"/><rect x="5.70" y="196.99" width="1.3" height="0.6" fill="#999"/><rect x="4.80" y="200.85" width="2.2" height="0.6" fill="#999"/><rect x="5.70" y="204.71" width="1.3" height="0.6" fill="#999"/><rect x="4.80" y="208.57" width="2.2" height="0.6" fill="#999"/><rect x="5.70" y="212.44" width="1.3" height="0.6" fill="#999"/><rect x="4.80" y="216.30" width="2.2" height="0.6" fill="#999"/><rect x="5.70" y="220.16" width="1.3" height="0.6" fill="#999"/><rect x="4.80" y="224.02" width="2.2" height="0.6" fill="#999"/><rect x="5.70" y="227.89" width="1.3" height="0.6" fill="#999"/><rect x="2.00" y="231.75" width="5" height="0.6" fill="#999"/><rect x="5.70" y="235.61" width="1.3" height="0.6" fill="#999"/><rect x="4.80" y="239.48" width="2.2" height="0.6" fill="#999"/><rect x="5.70" y="243.34" width="1.3" height="0.6" fill="#999"/><rect x="4.80" y="247.20" width="2.2" height="0.6" fill="#999"/><rect x="5.70" y="251.06" width="1.3" height="0.6" fill="#999"/><rect x="4.80" y="254.92" width="2.2" height="0.6" fill="#999"/><rect x="5.70" y="258.79" width="1.3" height="0.6" fill="#999"/><rect x="4.80" y="262.65" width="2.2" height="0.6" fill="#999"/><rect x="5.70" y="266.51" width="1.3" height="0.6" fill="#999"/><rect x="4.80" y="270.38" width="2.2" height="0.6" fill="#999"/><rect x="5.70" y="274.24" width="1.3" height="0.6" fill="#999"/><rect x="4.80" y="278.10" width="2.2" height="0.6" fill="#999"/><rect x="5.70" y="281.96" width="1.3" height="0.6" fill="#999"/><rect x="4.80" y="285.83" width="2.2" height="0.6" fill="#999"/><rect x="5.70" y="289.69" width="1.3" height="0.6" fill="#999"/><rect x="4.80" y="293.55" width="2.2" height="0.6" fill="#999"/><rect x="5.70" y="297.41" width="1.3" height="0.6" fill="#999"/><rect x="4.80" y="301.27" width="2.2" height="0.6" fill="#999"/><rect x="5.70" y="305.14" width="1.3" height="0.6" fill="#999"/><rect x="2.00" y="309.00" width="5" height="0.6" fill="#999"/><rect x="5.70" y="312.86" width="1.3" height="0.6" fill="#999"/><rect x="4.80" y="316.72" width="2.2" height="0.6" fill="#999"/><rect x="5.70" y="320.59" width="1.3" height="0.6" fill="#999"/><rect x="4.80" y="324.45" width="2.2" height="0.6" fill="#999"/><rect x="5.70" y="328.31" width="1.3" height="0.6" fill="#999"/><rect x="4.80" y="332.17" width="2.2" height="0.6" fill="#999"/><rect x="5.70" y="336.04" width="1.3" height="0.6" fill="#999"/><rect x="4.80" y="339.90" width="2.2" height="0.6" fill="#999"/><rect x="5.70" y="343.76" width="1.3" height="0.6" fill="#999"/><rect x="4.80" y="347.62" width="2.2" height="0.6" fill="#999"/><rect x="5.70" y="351.49" width="1.3" height="0.6" fill="#999"/><rect x="4.80" y="355.35" width="2.2" height="0.6" fill="#999"/><rect x="5.70" y="359.21" width="1.3" height="0.6" fill="#999"/><rect x="4.80" y="363.08" width="2.2" height="0.6" fill="#999"/><rect x="5.70" y="366.94" width="1.3" height="0.6" fill="#999"/><rect x="4.80" y="370.80" width="2.2" height="0.6" fill="#999"/><rect x="5.70" y="374.66" width="1.3" height="0.6" fill="#999"/><rect x="4.80" y="378.52" width="2.2" height="0.6" fill="#999"/><rect x="5.70" y="382.39" width="1.3" height="0.6" fill="#999"/><rect x="2.00" y="386.25" width="5" height="0.6" fill="#999"/><rect x="5.70" y="390.11" width="1.3" height="0.6" fill="#999"/><rect x="4.80" y="393.97" width="2.2" height="0.6" fill="#999"/><rect x="5.70" y="397.84" width="1.3" height="0.6" fill="#999"/><rect x="4.80" y="401.70" width="2.2" height="0.6" fill="#999"/><rect x="5.70" y="405.56" width="1.3" height="0.6" fill="#999"/><rect x="4.80" y="409.42" width="2.2" height="0.6" fill="#999"/><rect x="5.70" y="413.29" width="1.3" height="0.6" fill="#999"/><rect x="4.80" y="417.15" width="2.2" height="0.6" fill="#999"/><rect x="5.70" y="421.01" width="1.3" height="0.6" fill="#999"/><rect x="4.80" y="424.88" width="2.2" height="0.6" fill="#999"/><rect x="5.70" y="428.74" width="1.3" height="0.6" fill="#999"/><rect x="4.80" y="432.60" width="2.2" height="0.6" fill="#999"/><rect x="5.70" y="436.46" width="1.3" height="0.6" fill="#999"/><rect x="4.80" y="440.33" width="2.2" height="0.6" fill="#999"/><rect x="5.70" y="444.19" width="1.3" height="0.6" fill="#999"/><rect x="4.80" y="448.05" width="2.2" height="0.6" fill="#999"/><rect x="5.70" y="451.91" width="1.3" height="0.6" fill="#999"/><rect x="4.80" y="455.77" width="2.2" height="0.6" fill="#999"/><rect x="5.70" y="459.64" width="1.3" height="0.6" fill="#999"/><rect x="2.00" y="463.50" width="5" height="0.6" fill="#999"/></svg>
<div style="position:absolute;left:211px;top:128px;width:983px;height:665.5px;background:#c0c0c0;"></div>
<div style="position:absolute;left:1194px;top:128px;width:14px;height:665.5px;background:#f0f0f0;"></div>
<div style="position:absolute;left:1198px;top:308.5px;width:6.5px;height:305px;background:#858585;"></div>
<div style="position:absolute;left:211px;top:793.5px;width:983px;height:15px;background:#f0f0f0;"></div>
<div style="position:absolute;left:504px;top:796.8px;width:397.5px;height:7.2px;background:#858585;"></div>
<svg style="position:absolute;left:310px;top:229px;" width="800" height="472" viewBox="0 0 800 472"><defs><linearGradient id="shr" gradientUnits="userSpaceOnUse" x1="788" y1="0" x2="795.5" y2="0"><stop offset="0" stop-color="#5c5c5c"/><stop offset="1" stop-color="#c0c0c0"/></linearGradient><linearGradient id="shb" gradientUnits="userSpaceOnUse" x1="0" y1="464" x2="0" y2="470.5"><stop offset="0" stop-color="#5c5c5c"/><stop offset="1" stop-color="#c0c0c0"/></linearGradient></defs><path d="M788 8.5 L795.5 16 V470.5 L788 464 Z" fill="url(#shr)"/><path d="M7 464 H788 L795.5 470.5 H13.5 Z" fill="url(#shb)"/></svg>
<div style="position:absolute;left:307px;top:229px;width:791px;height:464px;background:#fff;box-shadow:0 0 2px rgba(0,0,0,0.22);"></div>
<div style="position:absolute;left:373.3px;top:295px;width:199px;height:75.5px;box-sizing:border-box;border:2.1px solid #75aef0;border-radius:3.5px;background:#fff;"></div>
<div style="position:absolute;left:376.3px;top:298px;width:193px;height:69.5px;background:linear-gradient(#ffffff 0%,#fcfcfc 35%,#ececec 85%,#e4e4e4 100%);"></div>
<svg style="position:absolute;left:376.8px;top:307.8px;" width="48" height="48" viewBox="0 0 48 48"><path d="M7.09 33.10 A19.2 19.2 0 1 1 11.74 38.77" fill="none" stroke="#1fc97a" stroke-width="2.6"/><path d="M9.04 36.54 L10.85 42.19 L14.93 37.27 Z" fill="#1fc97a"/><circle cx="24" cy="24" r="12.9" fill="#1fc97a"/><rect x="23" y="17.8" width="2" height="12.8" fill="#fff" opacity="0.9"/></svg>
<div class="t" style="left:434.7px;top:319px;font-size:29.3px;color:#111;font-weight:bold;letter-spacing:0.5px;-webkit-text-stroke:0.9px #111;transform:scaleX(1.08);transform-origin:0 0;">UL</div>
<div class="t" style="left:491.8px;top:319px;font-size:29.3px;color:#111;font-weight:bold;-webkit-text-stroke:0.9px #111;transform:scaleX(1.05);transform-origin:0 0;">1</div>
<div class="t" style="left:374.3px;top:298px;font-size:8.1px;color:#ff2e2e;">SB_0 (PLC.Tags.Table.WEINTEC_UL1 : M-9800)</div>
<div class="t" style="left:381.90000000000003px;top:316.3px;font-size:8.1px;color:#ff2e2e;">GP_0 (PLC.Tags.Table.WEINTEC_UL1 : M-9800)</div>
<div style="position:absolute;left:605.7px;top:295px;width:199px;height:75.5px;box-sizing:border-box;border:2.1px solid #75aef0;border-radius:3.5px;background:#fff;"></div>
<div style="position:absolute;left:608.7px;top:298px;width:193px;height:69.5px;background:linear-gradient(#ffffff 0%,#fcfcfc 35%,#ececec 85%,#e4e4e4 100%);"></div>
<svg style="position:absolute;left:609.2px;top:307.8px;" width="48" height="48" viewBox="0 0 48 48"><path d="M7.09 33.10 A19.2 19.2 0 1 1 11.74 38.77" fill="none" stroke="#1fc97a" stroke-width="2.6"/><path d="M9.04 36.54 L10.85 42.19 L14.93 37.27 Z" fill="#1fc97a"/><circle cx="24" cy="24" r="12.9" fill="#1fc97a"/><rect x="23" y="17.8" width="2" height="12.8" fill="#fff" opacity="0.9"/></svg>
<div class="t" style="left:667.1px;top:319px;font-size:29.3px;color:#111;font-weight:bold;letter-spacing:0.5px;-webkit-text-stroke:0.9px #111;transform:scaleX(1.08);transform-origin:0 0;">UL</div>
<div class="t" style="left:721.9000000000001px;top:319px;font-size:29.3px;color:#111;font-weight:bold;-webkit-text-stroke:0.9px #111;transform:scaleX(1.22);transform-origin:0 0;">2</div>
<div class="t" style="left:606.7px;top:298px;font-size:8.1px;color:#ff2e2e;">SB_1 (PLC.Tags.Table.WEINTEC_UL2 : M-9801)</div>
<div class="t" style="left:614.3000000000001px;top:316.3px;font-size:8.1px;color:#ff2e2e;">GP_1 (PLC.Tags.Table.WEINTEC_UL2 : M-9801)</div>
<div style="position:absolute;left:837.6px;top:295px;width:199px;height:75.5px;box-sizing:border-box;border:2.1px solid #75aef0;border-radius:3.5px;background:#fff;"></div>
<div style="position:absolute;left:840.6px;top:298px;width:193px;height:69.5px;background:linear-gradient(#ffffff 0%,#fcfcfc 35%,#ececec 85%,#e4e4e4 100%);"></div>
<svg style="position:absolute;left:841.1px;top:307.8px;" width="48" height="48" viewBox="0 0 48 48"><path d="M7.09 33.10 A19.2 19.2 0 1 1 11.74 38.77" fill="none" stroke="#1fc97a" stroke-width="2.6"/><path d="M9.04 36.54 L10.85 42.19 L14.93 37.27 Z" fill="#1fc97a"/><circle cx="24" cy="24" r="12.9" fill="#1fc97a"/><rect x="23" y="17.8" width="2" height="12.8" fill="#fff" opacity="0.9"/></svg>
<div class="t" style="left:899.0px;top:319px;font-size:29.3px;color:#111;font-weight:bold;letter-spacing:0.5px;-webkit-text-stroke:0.9px #111;transform:scaleX(1.08);transform-origin:0 0;">UL</div>
<div class="t" style="left:953.8000000000001px;top:319px;font-size:29.3px;color:#111;font-weight:bold;-webkit-text-stroke:0.9px #111;transform:scaleX(1.22);transform-origin:0 0;">3</div>
<div class="t" style="left:838.6px;top:298px;font-size:8.1px;color:#ff2e2e;">SB_2 (PLC.Tags.Table.WEINTEC_UL3 : M-9802)</div>
<div class="t" style="left:846.2px;top:316.3px;font-size:8.1px;color:#ff2e2e;">GP_2 (PLC.Tags.Table.WEINTEC_UL3 : M-9802)</div>
<div style="position:absolute;left:373.3px;top:407px;width:199px;height:75.5px;box-sizing:border-box;border:2.1px solid #75aef0;border-radius:3.5px;background:#fff;"></div>
<div style="position:absolute;left:376.3px;top:410px;width:193px;height:69.5px;background:linear-gradient(#ffffff 0%,#fcfcfc 35%,#ececec 85%,#e4e4e4 100%);"></div>
<svg style="position:absolute;left:376.8px;top:419.8px;" width="48" height="48" viewBox="0 0 48 48"><path d="M7.09 33.10 A19.2 19.2 0 1 1 11.74 38.77" fill="none" stroke="#1fc97a" stroke-width="2.6"/><path d="M9.04 36.54 L10.85 42.19 L14.93 37.27 Z" fill="#1fc97a"/><circle cx="24" cy="24" r="12.9" fill="#1fc97a"/><rect x="23" y="17.8" width="2" height="12.8" fill="#fff" opacity="0.9"/></svg>
<div class="t" style="left:434.7px;top:431px;font-size:29.3px;color:#111;font-weight:bold;letter-spacing:0.5px;-webkit-text-stroke:0.9px #111;transform:scaleX(1.08);transform-origin:0 0;">UL</div>
<div class="t" style="left:489.5px;top:431px;font-size:29.3px;color:#111;font-weight:bold;-webkit-text-stroke:0.9px #111;transform:scaleX(1.22);transform-origin:0 0;">4</div>
<div class="t" style="left:374.3px;top:410px;font-size:8.1px;color:#ff2e2e;">SB_3 (PLC.Tags.Table.WEINTEC_UL4 : M-9803)</div>
<div class="t" style="left:381.90000000000003px;top:428.3px;font-size:8.1px;color:#ff2e2e;">GP_3 (PLC.Tags.Table.WEINTEC_UL4 : M-9803)</div>
<div style="position:absolute;left:605.7px;top:407px;width:199px;height:75.5px;box-sizing:border-box;border:2.1px solid #75aef0;border-radius:3.5px;background:#fff;"></div>
<div style="position:absolute;left:608.7px;top:410px;width:193px;height:69.5px;background:linear-gradient(#ffffff 0%,#fcfcfc 35%,#ececec 85%,#e4e4e4 100%);"></div>
<svg style="position:absolute;left:609.2px;top:419.8px;" width="48" height="48" viewBox="0 0 48 48"><path d="M7.09 33.10 A19.2 19.2 0 1 1 11.74 38.77" fill="none" stroke="#1fc97a" stroke-width="2.6"/><path d="M9.04 36.54 L10.85 42.19 L14.93 37.27 Z" fill="#1fc97a"/><circle cx="24" cy="24" r="12.9" fill="#1fc97a"/><rect x="23" y="17.8" width="2" height="12.8" fill="#fff" opacity="0.9"/></svg>
<div class="t" style="left:667.1px;top:431px;font-size:29.3px;color:#111;font-weight:bold;letter-spacing:0.5px;-webkit-text-stroke:0.9px #111;transform:scaleX(1.08);transform-origin:0 0;">UL</div>
<div class="t" style="left:721.9000000000001px;top:431px;font-size:29.3px;color:#111;font-weight:bold;-webkit-text-stroke:0.9px #111;transform:scaleX(1.22);transform-origin:0 0;">5</div>
<div class="t" style="left:606.7px;top:410px;font-size:8.1px;color:#ff2e2e;">SB_4 (PLC.Tags.Table.WEINTEC_UL5 : M-9804)</div>
<div class="t" style="left:614.3000000000001px;top:428.3px;font-size:8.1px;color:#ff2e2e;">GP_4 (PLC.Tags.Table.WEINTEC_UL5 : M-9804)</div>
<div style="position:absolute;left:837.6px;top:407px;width:199px;height:75.5px;box-sizing:border-box;border:2.1px solid #75aef0;border-radius:3.5px;background:#fff;"></div>
<div style="position:absolute;left:840.6px;top:410px;width:193px;height:69.5px;background:linear-gradient(#ffffff 0%,#fcfcfc 35%,#ececec 85%,#e4e4e4 100%);"></div>
<svg style="position:absolute;left:841.1px;top:419.8px;" width="48" height="48" viewBox="0 0 48 48"><path d="M7.09 33.10 A19.2 19.2 0 1 1 11.74 38.77" fill="none" stroke="#1fc97a" stroke-width="2.6"/><path d="M9.04 36.54 L10.85 42.19 L14.93 37.27 Z" fill="#1fc97a"/><circle cx="24" cy="24" r="12.9" fill="#1fc97a"/><rect x="23" y="17.8" width="2" height="12.8" fill="#fff" opacity="0.9"/></svg>
<div class="t" style="left:899.0px;top:431px;font-size:29.3px;color:#111;font-weight:bold;letter-spacing:0.5px;-webkit-text-stroke:0.9px #111;transform:scaleX(1.08);transform-origin:0 0;">UL</div>
<div class="t" style="left:953.8000000000001px;top:431px;font-size:29.3px;color:#111;font-weight:bold;-webkit-text-stroke:0.9px #111;transform:scaleX(1.22);transform-origin:0 0;">6</div>
<div class="t" style="left:838.6px;top:410px;font-size:8.1px;color:#ff2e2e;">SB_5 (PLC.Tags.Table.WEINTEC_UL6 : M-9805)</div>
<div class="t" style="left:846.2px;top:428.3px;font-size:8.1px;color:#ff2e2e;">GP_5 (PLC.Tags.Table.WEINTEC_UL6 : M-9805)</div>
<div class="t" style="left:565.5px;top:251.5px;font-size:16px;color:#ff1a1a;">ALARM - Zkontroluj STOP tlacítko!</div>
<div class="t" style="left:567px;top:252.5px;font-size:8px;color:rgba(230,30,30,0.75);letter-spacing:-0.5px;">AL_0 (PLC.Tags.Table.Weintec_Alarm_STOP : M-9812)</div>
<div class="t" style="left:906.7px;top:239px;font-size:8.1px;color:#ff2e2e;">DC_0</div>
<div class="t" style="left:917.3px;top:246.3px;font-size:15px;color:#111;">11/24/23 FRI</div>
<div class="t" style="left:1018px;top:246.3px;font-size:15px;color:#111;">11:46:46</div>
<div style="position:absolute;left:488.6px;top:545.8px;width:203px;height:92.4px;box-sizing:border-box;border:2.1px solid #75aef0;border-radius:3.5px;background:#fff;"></div>
<div style="position:absolute;left:491.6px;top:548.8px;width:197px;height:86.4px;background:linear-gradient(#ffffff 0%,#fcfcfc 35%,#ececec 85%,#e4e4e4 100%);"></div>
<div class="t" style="left:514px;top:577.8px;font-size:30px;color:#111;font-weight:bold;letter-spacing:1.5px;-webkit-text-stroke:1px #111;transform:scaleX(1.08);transform-origin:0 0;">OTEVRIT</div>
<div class="t" style="left:489.5px;top:548.2px;font-size:8.1px;color:#ff2e2e;">SB_6 (PLC.Tags.Table.Weintec_Open : M-9806)</div>
<svg style="position:absolute;left:312px;top:641px;" width="51" height="41" viewBox="0 0 51 41"><path d="M25.5 1.5 L50 40.5 H1 Z" fill="#d7e8fc"/><rect x="22.8" y="13" width="5.4" height="16.5" fill="#6d6d6d"/><rect x="22.8" y="31.5" width="5.4" height="5" fill="#6d6d6d"/></svg>
<div class="t" style="left:314.6px;top:640.8px;font-size:8.1px;color:#ff2e2e;">SB_7 (PLC.Tags.Table.Weintec_Alarm_ACK : M-9813)</div>
<svg style="position:absolute;left:780px;top:532px;" width="65" height="88" viewBox="0 0 65 88"><defs><mask id="um"><rect x="0" y="0" width="65" height="88" fill="#fff"/><ellipse cx="31" cy="24" rx="27" ry="30.5" fill="#000"/></mask></defs><path d="M1.5 86 C2 66 6 54 12.5 46 L50 42 C57 52 62 66 63 86 Z" fill="#d7e7fb" mask="url(#um)"/><ellipse cx="31" cy="24" rx="20" ry="22.7" fill="#d7e7fb"/></svg>
<svg style="position:absolute;left:813px;top:577px;" width="40" height="44" viewBox="0 0 40 44"><path d="M15.80 8.90 L16.15 4.58 L23.85 4.58 L24.20 8.90 L24.61 9.07 L25.02 9.26 L25.43 9.46 L28.40 6.69 L33.85 12.79 L31.37 16.12 L31.55 16.57 L31.72 17.02 L31.88 17.49 L35.74 17.89 L35.74 26.51 L31.88 26.91 L31.73 27.37 L31.56 27.82 L31.37 28.28 L33.85 31.61 L28.40 37.71 L25.43 34.94 L25.03 35.14 L24.62 35.33 L24.20 35.50 L23.85 39.82 L16.15 39.82 L15.80 35.50 L15.39 35.33 L14.98 35.14 L14.57 34.94 L11.60 37.71 L6.15 31.61 L8.63 28.28 L8.45 27.83 L8.28 27.38 L8.12 26.91 L4.26 26.51 L4.26 17.89 L8.12 17.49 L8.27 17.03 L8.44 16.58 L8.63 16.12 L6.15 12.79 L11.60 6.69 L14.57 9.46 L14.97 9.26 L15.38 9.07 Z" fill="#6a9e88" stroke="#6a9e88" stroke-width="1.6" stroke-linejoin="round"/><ellipse cx="20" cy="22.2" rx="7.6" ry="8.51" fill="#d7e7fb"/></svg>
<div class="t" style="left:779.8px;top:536px;font-size:8.1px;color:#ff2e2e;">FK_1</div>
<div style="position:absolute;left:887.2px;top:558px;width:61.5px;height:61.5px;border:1px solid #b9b9b9;box-sizing:border-box;background:#fff;"></div>
<div class="t" style="left:889px;top:561px;font-size:8.1px;color:#ff2e2e;">AP_0 (PLC.Tags.Table.Weintec_Manual : M-9811)</div>
<div style="position:absolute;left:754.5px;top:626.7px;width:129.5px;height:64.5px;background:#085b7d;border:1px solid #0b3556;box-sizing:border-box;"></div>
<div class="t" style="left:773px;top:645.8px;font-size:25px;color:#a8eaf8;">Odhlásit</div>
<div class="t" style="left:755.5px;top:628.5px;font-size:8.4px;color:#ff3838;">SW_0 (UAC command : PLW-8950)</div>
<svg style="position:absolute;left:1046px;top:641px;" width="44" height="44" viewBox="0 0 44 44"><path d="M17.00 7.87 L17.45 3.58 L25.75 3.58 L26.20 7.87 L26.75 8.07 L27.30 8.29 L27.85 8.55 L31.20 5.84 L37.06 11.70 L34.35 15.05 L34.60 15.59 L34.83 16.13 L35.03 16.70 L39.32 17.15 L39.32 25.45 L35.03 25.90 L34.83 26.45 L34.61 27.00 L34.35 27.55 L37.06 30.90 L31.20 36.76 L27.85 34.05 L27.31 34.30 L26.77 34.53 L26.20 34.73 L25.75 39.02 L17.45 39.02 L17.00 34.73 L16.45 34.53 L15.90 34.31 L15.35 34.05 L12.00 36.76 L6.14 30.90 L8.85 27.55 L8.60 27.01 L8.37 26.47 L8.17 25.90 L3.88 25.45 L3.88 17.15 L8.17 16.70 L8.37 16.15 L8.59 15.60 L8.85 15.05 L6.14 11.70 L12.00 5.84 L15.35 8.55 L15.89 8.30 L16.43 8.07 Z" fill="#777777" stroke="#777777" stroke-width="1.8" stroke-linejoin="round"/><ellipse cx="21.6" cy="21.3" rx="8.65" ry="8.65" fill="#ffffff"/></svg>
<svg style="position:absolute;left:1068px;top:663px;" width="20" height="20" viewBox="0 0 20 20"><circle cx="10.3" cy="9.7" r="8.9" fill="#d3e5fb"/><path d="M5 9.5 L8.5 13 L15 6.5" stroke="#fff" stroke-width="2.4" fill="none"/></svg>
<div class="t" style="left:1050px;top:646.5px;font-size:8.1px;color:#ff2e2e;">FK_0</div>
<div style="position:absolute;left:210.3px;top:128px;width:0.8px;height:666px;background:#cfcfcf;"></div>
<div style="position:absolute;left:203.5px;top:741px;width:7px;height:0.8px;background:#cfcfcf;"></div>
<div style="position:absolute;left:1212px;top:104px;width:169px;height:14.5px;background:linear-gradient(#c2d3e8,#b4c9e2);"></div>
<div class="t" style="left:1214.5px;top:107.5px;font-size:8.9px;color:#333;">Picture Library</div>
<svg style="position:absolute;left:1356px;top:109px;" width="8" height="5" viewBox="0 0 8 5"><path d="M0 0 H8 L4 4.5 Z" fill="#222"/></svg>
<svg style="position:absolute;left:1370px;top:107px;" width="9" height="9" viewBox="0 0 9 9"><path d="M1 1 L8 8 M8 1 L1 8" stroke="#111" stroke-width="1.5"/></svg>
<div style="position:absolute;left:1212px;top:118.5px;width:169px;height:675.5px;background:#f0f0f0;"></div>
<div style="position:absolute;left:1211.5px;top:118.5px;width:1px;height:675.5px;background:#e2e6ee;"></div>
<div style="position:absolute;left:1218.5px;top:124.5px;width:132.5px;height:13.5px;background:linear-gradient(#fdfdfd,#f4f4f4);border:1px solid #dedede;box-sizing:border-box;"></div>
<div class="t" style="left:1084.8px;width:400px;text-align:center;top:127.3px;font-size:9px;color:#555;">[ Project ]</div>
<svg style="position:absolute;left:1343px;top:131px;" width="5" height="3" viewBox="0 0 5 3"><path d="M0 0 H5 L2.5 3 Z" fill="#333"/></svg>
<div style="position:absolute;left:1357.5px;top:123px;width:17px;height:15.5px;background:#fafafa;border:1px solid #e2e2e2;box-sizing:border-box;"></div>
<svg style="position:absolute;left:1362px;top:127px;" width="8" height="7" viewBox="0 0 8 7"><rect x="0.5" y="0.5" width="7" height="6" fill="#fff" stroke="#4a7fd0"/><rect x="2" y="2" width="3" height="3" fill="#f0a040"/></svg>
<div style="position:absolute;left:1218px;top:144.8px;width:157px;height:13.7px;background:#f2f2f2;border:1px solid #ebebeb;box-sizing:border-box;"></div>
<div style="position:absolute;left:1218px;top:163px;width:157px;height:580px;background:#efefef;border-top:1px solid #d8d8d8;border-bottom:1px solid #e2e2e2;border-left:1px solid #e6e6e6;box-sizing:border-box;"></div>
<div style="position:absolute;left:1360.5px;top:164px;width:1px;height:578px;background:#e4e4e4;"></div>
<div style="position:absolute;left:1362.7px;top:177px;width:9.3px;height:13px;background:#858585;"></div>
<div style="position:absolute;left:1218.6px;top:163.7px;width:92px;height:96px;background:#ffff1e;"></div>
<div style="position:absolute;left:1221.5px;top:169.5px;width:86.5px;height:88px;border:1px solid #ffff9a;box-sizing:border-box;"></div>
<div style="position:absolute;left:1223.5px;top:171.5px;width:82px;height:83px;border:1px solid #f0f070;box-sizing:border-box;"></div>
<div class="t" style="left:1224.5px;top:165.8px;font-size:9px;color:#333;">0</div>
<div style="position:absolute;left:1243.7px;top:196px;width:39.3px;height:39.3px;background:#fff;"></div>
<svg style="position:absolute;left:1248px;top:200px;" width="31" height="31" viewBox="0 0 31 31"><circle cx="15.5" cy="15.5" r="14.7" fill="#f47c5c"/><circle cx="15.5" cy="12" r="4.2" fill="#fff"/><path d="M8 22.5 C8 17 11 16.5 15.5 16.5 C20 16.5 23 17 23 22.5 Z" fill="#fff"/></svg>
<div style="position:absolute;left:1221px;top:266.1px;width:85.5px;height:86.4px;border:1px solid #e0e0e0;box-sizing:border-box;"></div>
<div style="position:absolute;left:1224px;top:273.5px;width:79px;height:75px;border:1px solid #d6d6d6;border-right-color:#e6e6e6;border-bottom-color:#e6e6e6;box-sizing:border-box;"></div>
<div style="position:absolute;left:1222px;top:261.5px;width:9px;height:9px;background:#efefef;"></div>
<div class="t" style="left:1223.5px;top:262.2px;font-size:9px;color:#333;">1</div>
<div style="position:absolute;left:1243.7px;top:292.5px;width:39.3px;height:39.3px;background:#fff;"></div>
<svg style="position:absolute;left:1243.7px;top:292.5px;" width="40" height="40" viewBox="0 0 40 40"><path d="M9 23 H26" stroke="#5a7fc8" stroke-width="0.6"/><path d="M26 21 H31" stroke="#e05050" stroke-width="1.2"/></svg>
<div style="position:absolute;left:1221px;top:362.6px;width:85.5px;height:86.4px;border:1px solid #e0e0e0;box-sizing:border-box;"></div>
<div style="position:absolute;left:1224px;top:370px;width:79px;height:75px;border:1px solid #d6d6d6;border-right-color:#e6e6e6;border-bottom-color:#e6e6e6;box-sizing:border-box;"></div>
<div style="position:absolute;left:1222px;top:358px;width:9px;height:9px;background:#efefef;"></div>
<div class="t" style="left:1223.5px;top:358.7px;font-size:9px;color:#333;">2</div>
<div style="position:absolute;left:1243.7px;top:389px;width:39.3px;height:39.3px;background:#fff;"></div>
<div style="position:absolute;left:1221px;top:459.1px;width:85.5px;height:86.4px;border:1px solid #e0e0e0;box-sizing:border-box;"></div>
<div style="position:absolute;left:1224px;top:466.5px;width:79px;height:75px;border:1px solid #d6d6d6;border-right-color:#e6e6e6;border-bottom-color:#e6e6e6;box-sizing:border-box;"></div>
<div style="position:absolute;left:1222px;top:454.5px;width:9px;height:9px;background:#efefef;"></div>
<div class="t" style="left:1223.5px;top:455.2px;font-size:9px;color:#333;">3</div>
<div style="position:absolute;left:1243.7px;top:485.5px;width:39.3px;height:39.3px;background:#fff;"></div>
<div style="position:absolute;left:1221px;top:555.1px;width:85.5px;height:86.4px;border:1px solid #e0e0e0;box-sizing:border-box;"></div>
<div style="position:absolute;left:1224px;top:562.5px;width:79px;height:75px;border:1px solid #d6d6d6;border-right-color:#e6e6e6;border-bottom-color:#e6e6e6;box-sizing:border-box;"></div>
<div style="position:absolute;left:1222px;top:550.5px;width:9px;height:9px;background:#efefef;"></div>
<div class="t" style="left:1223.5px;top:551.2px;font-size:9px;color:#333;">4</div>
<div style="position:absolute;left:1243.7px;top:581.5px;width:39.3px;height:39.3px;background:#fff;"></div>
<svg style="position:absolute;left:1243.7px;top:581.5px;" width="40" height="40" viewBox="0 0 40 40"><rect x="4.0" y="7.7" width="5.2" height="4.7" rx="0.8" fill="#a8a8a8"/><rect x="10.5" y="7.7" width="5.2" height="4.7" rx="0.8" fill="#a8a8a8"/><rect x="17.0" y="7.7" width="5.2" height="4.7" rx="0.8" fill="#a8a8a8"/><rect x="23.5" y="7.7" width="5.2" height="4.7" rx="0.8" fill="#2b6fc8"/><rect x="30.0" y="7.7" width="5.2" height="4.7" rx="0.8" fill="#2b6fc8"/><rect x="4.0" y="14.0" width="5.2" height="4.7" rx="0.8" fill="#a8a8a8"/><rect x="10.5" y="14.0" width="5.2" height="4.7" rx="0.8" fill="#a8a8a8"/><rect x="17.0" y="14.0" width="5.2" height="4.7" rx="0.8" fill="#a8a8a8"/><rect x="23.5" y="14.0" width="5.2" height="4.7" rx="0.8" fill="#2aa0d0"/><rect x="30.0" y="14.0" width="5.2" height="4.7" rx="0.8" fill="#2aa0d0"/><rect x="4.0" y="20.3" width="5.2" height="4.7" rx="0.8" fill="#a8a8a8"/><rect x="10.5" y="20.3" width="5.2" height="4.7" rx="0.8" fill="#a8a8a8"/><rect x="17.0" y="20.3" width="5.2" height="4.7" rx="0.8" fill="#a8a8a8"/><rect x="23.5" y="20.3" width="5.2" height="4.7" rx="0.8" fill="#8cc040"/><rect x="30.0" y="20.3" width="5.2" height="4.7" rx="0.8" fill="#8cc040"/><rect x="4.0" y="26.6" width="5.2" height="4.7" rx="0.8" fill="#a8a8a8"/><rect x="10.5" y="26.6" width="5.2" height="4.7" rx="0.8" fill="#a8a8a8"/><rect x="17.0" y="26.6" width="5.2" height="4.7" rx="0.8" fill="#a8a8a8"/><rect x="23.5" y="26.6" width="11.7" height="4.7" rx="0.8" fill="#f08a24"/></svg>
<div style="position:absolute;left:1221px;top:652.1px;width:85.5px;height:86.4px;border:1px solid #e0e0e0;box-sizing:border-box;"></div>
<div style="position:absolute;left:1224px;top:659.5px;width:79px;height:75px;border:1px solid #d6d6d6;border-right-color:#e6e6e6;border-bottom-color:#e6e6e6;box-sizing:border-box;"></div>
<div style="position:absolute;left:1222px;top:647.5px;width:9px;height:9px;background:#efefef;"></div>
<div class="t" style="left:1223.5px;top:648.2px;font-size:9px;color:#333;">5</div>
<div style="position:absolute;left:1243.7px;top:678.5px;width:39.3px;height:39.3px;background:#fff;"></div>
<svg style="position:absolute;left:1243.7px;top:678.5px;" width="40" height="40" viewBox="0 0 40 40"><rect x="4.5" y="4" width="4" height="1" fill="#4a7fd0"/><rect x="20" y="4" width="4" height="1" fill="#4a7fd0"/><path d="M8 5.6 H34" stroke="#999" stroke-width="0.6"/><rect x="4.5" y="6.5" width="30" height="3.8" fill="#fff" stroke="#6a9ad8" stroke-width="0.6"/><rect x="4.5" y="11.5" width="5.2" height="4.4" rx="0.6" fill="#1e1e1e"/><rect x="10.8" y="11.5" width="5.2" height="4.4" rx="0.6" fill="#1e1e1e"/><rect x="17.1" y="11.5" width="5.2" height="4.4" rx="0.6" fill="#1e1e1e"/><rect x="23.4" y="11.5" width="5.2" height="4.4" rx="0.6" fill="#3b78c8"/><rect x="29.7" y="11.5" width="5.2" height="4.4" rx="0.6" fill="#3b78c8"/><rect x="4.5" y="17.6" width="5.2" height="4.4" rx="0.6" fill="#1e1e1e"/><rect x="10.8" y="17.6" width="5.2" height="4.4" rx="0.6" fill="#1e1e1e"/><rect x="17.1" y="17.6" width="5.2" height="4.4" rx="0.6" fill="#1e1e1e"/><rect x="23.4" y="17.6" width="5.2" height="4.4" rx="0.6" fill="#3b78c8"/><rect x="29.7" y="17.6" width="5.2" height="4.4" rx="0.6" fill="#3b78c8"/><rect x="4.5" y="23.7" width="5.2" height="4.4" rx="0.6" fill="#1e1e1e"/><rect x="10.8" y="23.7" width="5.2" height="4.4" rx="0.6" fill="#1e1e1e"/><rect x="17.1" y="23.7" width="5.2" height="4.4" rx="0.6" fill="#1e1e1e"/><rect x="23.4" y="23.7" width="5.2" height="4.4" rx="0.6" fill="#3b78c8"/><rect x="29.7" y="23.7" width="5.2" height="4.4" rx="0.6" fill="#3b78c8"/><rect x="4.5" y="29.8" width="5.2" height="4.4" rx="0.6" fill="#1e1e1e"/><rect x="10.8" y="29.8" width="5.2" height="4.4" rx="0.6" fill="#1e1e1e"/><rect x="17.1" y="29.8" width="5.2" height="4.4" rx="0.6" fill="#1e1e1e"/><rect x="23.4" y="29.8" width="11.5" height="4.4" rx="0.6" fill="#3b78c8"/></svg>
<div style="position:absolute;left:1222px;top:752.8px;width:143px;height:1.5px;background:#dde3e3;"></div>
<div style="position:absolute;left:1364.6px;top:747px;width:5.8px;height:12px;background:#1d6ddc;"></div>
<div style="position:absolute;left:1216px;top:764.2px;width:162px;height:1px;background:#dadada;"></div>
<div style="position:absolute;left:1217px;top:771.5px;width:160px;height:15.5px;background:#fff;border:1px solid #e4e4e4;border-radius:2px;box-sizing:border-box;"></div>
<div class="t" style="left:1097px;width:400px;text-align:center;top:775.5px;font-size:8px;color:#444;">Remove Picture</div>
<div style="position:absolute;left:1213px;top:793.5px;width:168px;height:0.8px;background:#d8dce6;"></div>
<div style="position:absolute;left:1212px;top:794.3px;width:169px;height:14px;background:#eceef6;"></div>
<div style="position:absolute;left:1270px;top:794.3px;width:54.5px;height:14px;background:#f7f7f7;"></div>
<div class="t" style="left:1219px;top:797.5px;font-size:8.5px;color:#777;">Shape Libr...</div>
<div class="t" style="left:1274px;top:797.5px;font-size:8.5px;color:#333;">Picture Lib...</div>
<div class="t" style="left:1329px;top:797.5px;font-size:8.5px;color:#777;">Sound Libr...</div>
<div style="position:absolute;left:0px;top:808.5px;width:1381px;height:15.5px;background:#f0f0f0;"></div>
<div class="t" style="left:0px;top:813.8px;font-size:9px;color:#333;">cMT3072XH / cMT3072XH2 / cMT3072XHT (1024 x 600)</div>
<div style="position:absolute;left:233px;top:810px;width:1px;height:14px;background:#d2d2d2;"></div>
<div style="position:absolute;left:315px;top:810px;width:1px;height:14px;background:#d2d2d2;"></div>
<div style="position:absolute;left:1048px;top:810px;width:1px;height:14px;background:#d2d2d2;"></div>
<div style="position:absolute;left:1091.5px;top:810px;width:1px;height:14px;background:#d2d2d2;"></div>
<div style="position:absolute;left:1134.5px;top:810px;width:1px;height:14px;background:#d2d2d2;"></div>
<div style="position:absolute;left:1167px;top:810px;width:1px;height:14px;background:#d2d2d2;"></div>
<div style="position:absolute;left:1200.5px;top:810px;width:1px;height:14px;background:#d2d2d2;"></div>
<div style="position:absolute;left:1212px;top:810px;width:1px;height:14px;background:#d2d2d2;"></div>
<div style="position:absolute;left:1233.5px;top:810px;width:1px;height:14px;background:#d2d2d2;"></div>
<div style="position:absolute;left:1261.5px;top:810px;width:1px;height:14px;background:#d2d2d2;"></div>
<div style="position:absolute;left:1287.5px;top:810px;width:1px;height:14px;background:#d2d2d2;"></div>
<div class="t" style="left:1136.8px;top:813.8px;font-size:9.2px;color:#333;">X = 50</div>
<div class="t" style="left:1169.4px;top:813.8px;font-size:9.2px;color:#333;">Y = 66</div>
<div class="t" style="left:1215px;top:813.8px;font-size:8.4px;color:#aaa;">CAP</div>
<div class="t" style="left:1237px;top:813.8px;font-size:8.4px;color:#aaa;">NUM</div>
<div class="t" style="left:1264.5px;top:813.8px;font-size:8.4px;color:#aaa;">SCRL</div>
<div class="t" style="left:1290.5px;top:813.8px;font-size:9.2px;color:#333;">200 %</div>
<div style="position:absolute;left:1322px;top:818px;width:40px;height:1px;background:#d6d6d6;"></div>
<div style="position:absolute;left:1319px;top:817.5px;width:1.5px;height:1px;background:#bbb;"></div>
<div style="position:absolute;left:1363px;top:817.5px;width:1.5px;height:1px;background:#bbb;"></div>
<svg style="position:absolute;left:1354px;top:814px;" width="6" height="9" viewBox="0 0 6 9"><path d="M0.5 3 L3 0.5 L5.5 3 V8.5 H0.5 Z" fill="#1d6ddc"/></svg>
<svg style="position:absolute;left:1369px;top:814px;" width="8" height="8" viewBox="0 0 8 8"><rect x="0.5" y="0.5" width="7" height="7" fill="none" stroke="#8aaee0" stroke-dasharray="1.5 1"/><rect x="2.5" y="2.5" width="3" height="3" fill="#8aaee0"/></svg>
</body></html>
